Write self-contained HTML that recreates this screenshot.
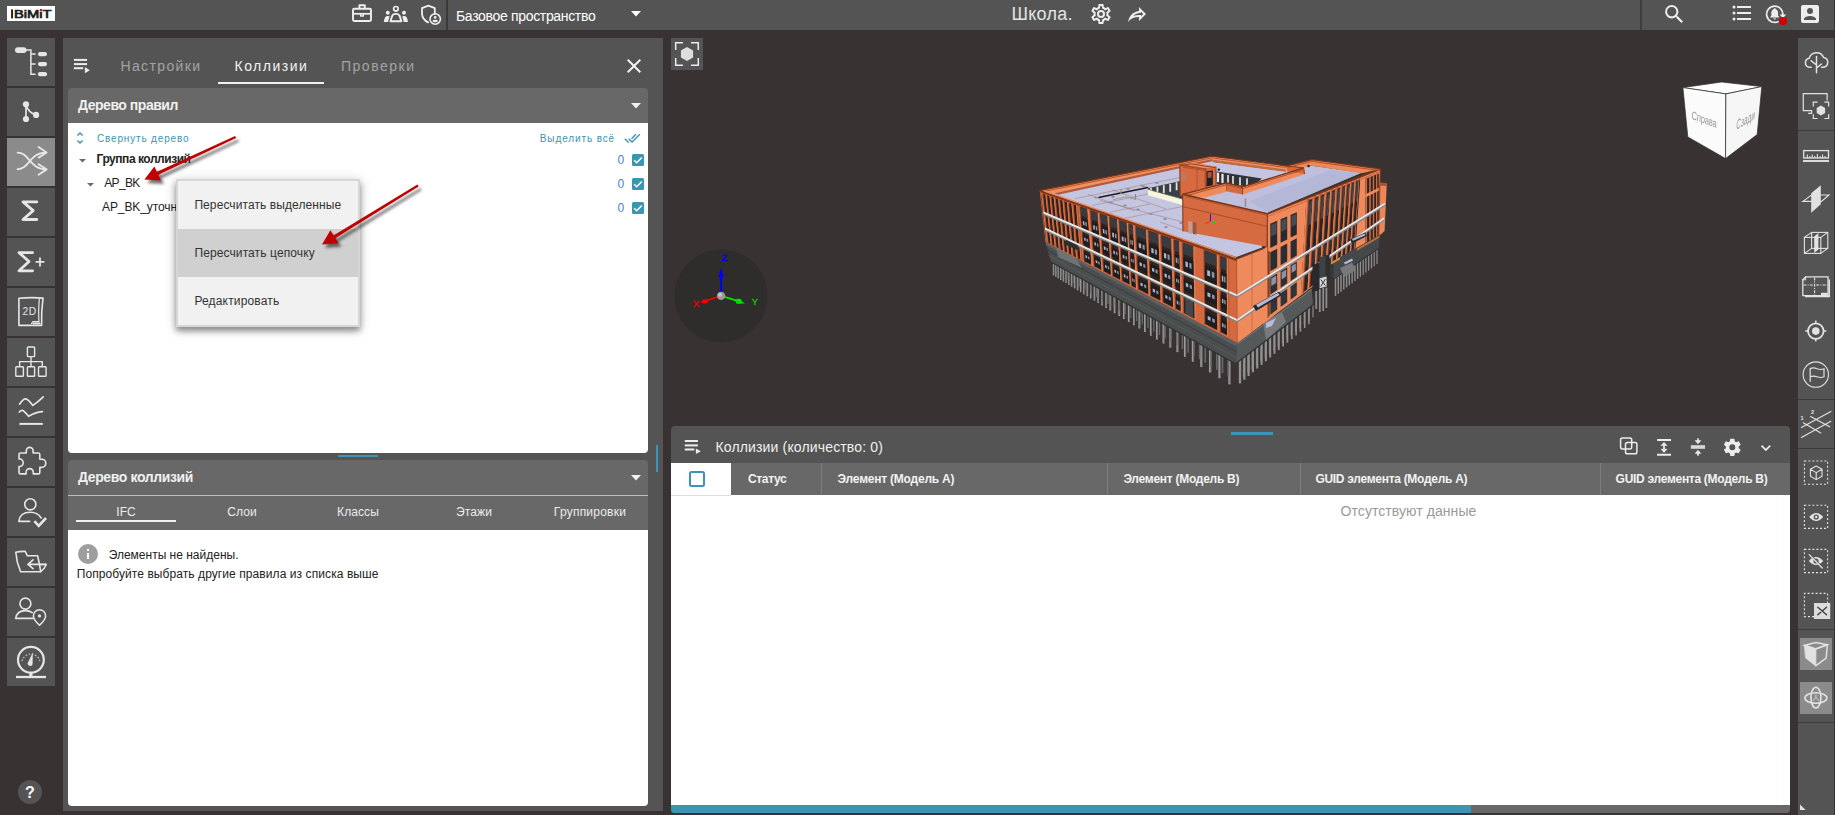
<!DOCTYPE html>
<html lang="ru">
<head>
<meta charset="utf-8">
<title>BIMIT</title>
<style>
*{box-sizing:border-box;margin:0;padding:0}
html,body{width:1835px;height:815px;overflow:hidden}
body{background:#383332;font-family:"Liberation Sans",sans-serif;position:relative;color:#222}
.abs{position:absolute}
.t{position:absolute;white-space:nowrap;line-height:1}
svg{position:absolute;overflow:visible}
#topbar{left:0;top:0;width:1835px;height:30px;background:#545454}
.lbtn{position:absolute;left:7px;width:48px;height:48px;background:#545454}
.lbtn.act{background:#8b8b8b}
#lpanel{left:63px;top:38px;width:600px;height:773px;background:#545454}
#rtool{left:1798px;top:38px;width:36px;height:777px;background:#545454}
#bpanel{left:671px;top:426px;width:1119px;height:387px;background:#545454;border-radius:4px 4px 3px 3px;overflow:hidden}
.hd{background:#686868}
.teal{background:#3b95b3}
.cb{position:absolute;left:632px;width:12px;height:12px;background:#3b95b3;border-radius:1.5px}
.cnt{position:absolute;font-size:12px;color:#3b82f6;line-height:1;left:617.5px}
.mi{position:absolute;left:0;width:180px;height:48px}
.th{position:absolute;top:463px;height:32px;background:#686868;border-left:1px solid #7d7d7d}
.tht{position:absolute;font-size:12px;font-weight:700;color:#f2f2f2;line-height:1;white-space:nowrap;top:473px}
.rsep{position:absolute;left:1798px;width:36px;height:1.5px;background:#3d3a3a}
</style>
</head>
<body>

<!-- ================= TOP BAR ================= -->
<div id="topbar" class="abs"></div>
<div class="abs" style="left:7px;top:6px;width:48px;height:15px;background:#fff"></div>
<svg style="left:7px;top:6px" width="48" height="15" viewBox="7 6 48 15">
<rect x="11.1" y="9.4" width="1.9" height="9" fill="#1e1e1e"/>
<text x="13.9" y="18.3" font-family="Liberation Sans, sans-serif" font-size="11.4" fill="#1e1e1e" stroke="#1e1e1e" stroke-width="0.7" textLength="37.6" lengthAdjust="spacingAndGlyphs">BiMiT</text>
<rect x="39.6" y="8.6" width="2.8" height="2.9" fill="#fff"/>
<rect x="39.9" y="9.1" width="2.2" height="2.1" fill="#f00000"/>
</svg>
<div class="abs" style="left:446px;top:0;width:2px;height:30px;background:#3c3939"></div>
<div class="t" style="left:456px;top:8.8px;font-size:14px;color:#fff;letter-spacing:-0.33px">Базовое пространство</div>
<svg style="left:631px;top:11px" width="10" height="6" viewBox="0 0 10 6"><path d="M0,0H10L5,5.5Z" fill="#fff"/></svg>
<div class="t" style="left:1011.5px;top:5px;font-size:18px;color:#e4e4e4;letter-spacing:0.25px">Школа.</div>
<div class="abs" style="left:1640px;top:0;width:2px;height:30px;background:#403d3d"></div>


<!-- top bar icons -->
<svg style="left:352px;top:4px" width="20" height="18" viewBox="0 0 20 18" fill="none" stroke="#efefef" stroke-width="1.9" stroke-linejoin="round">
  <rect x="1" y="4.8" width="18" height="12.2" rx="1.2"/>
  <path d="M7.4,4.8V1.2H12.8V4.8"/>
  <path d="M1,9.8H19" stroke-width="1.7"/>
  <path d="M8.6,9.8V12H11.4V9.8" stroke-width="1.3"/>
</svg>
<svg style="left:383px;top:5px" width="26" height="18" viewBox="0 0 26 18">
  <circle cx="12.9" cy="3.8" r="2.3" fill="none" stroke="#efefef" stroke-width="1.7"/>
  <path d="M7.4,16.2L9.3,10.6Q10,8.9 12.9,8.9Q15.8,8.9 16.5,10.6L18.4,16.2Z" fill="none" stroke="#efefef" stroke-width="1.9" stroke-linejoin="round"/>
  <circle cx="4.8" cy="7.7" r="2" fill="#efefef"/>
  <circle cx="21" cy="7.7" r="2" fill="#efefef"/>
  <path d="M0.8,17.1Q1.4,12.2 3.2,11.2Q4.6,10.6 6.6,11.2L5,17.1Z" fill="#efefef"/>
  <path d="M25,17.1Q24.4,12.2 22.6,11.2Q21.2,10.6 19.2,11.2L20.8,17.1Z" fill="#efefef"/>
</svg>
<svg style="left:420px;top:4px" width="22" height="22" viewBox="0 0 22 22" fill="none" stroke="#efefef">
  <path d="M14.8,10V4.2L8.4,1.6L2,4.2V9.6Q2.3,15.6 8.2,18.4" stroke-width="1.8" stroke-linejoin="round" stroke-linecap="round"/>
  <circle cx="15.2" cy="15" r="5.2" stroke-width="1.6"/>
  <circle cx="15.2" cy="13.4" r="1.3" fill="#efefef" stroke="none"/>
  <ellipse cx="15.2" cy="17" rx="2.7" ry="1.3" fill="#efefef" stroke="none"/>
</svg>
<svg style="left:1089px;top:1.9px" width="24" height="24" viewBox="0 0 24 24"><path fill="#ededed" d="M12,8A4,4 0 0,1 16,12A4,4 0 0,1 12,16A4,4 0 0,1 8,12A4,4 0 0,1 12,8M12,10A2,2 0 0,0 10,12A2,2 0 0,0 12,14A2,2 0 0,0 14,12A2,2 0 0,0 12,10M10,22C9.75,22 9.54,21.82 9.5,21.58L9.13,18.93C8.5,18.68 7.96,18.34 7.44,17.94L4.95,18.95C4.73,19.03 4.46,18.95 4.34,18.73L2.34,15.27C2.21,15.05 2.27,14.78 2.46,14.63L4.57,12.97L4.5,12L4.57,11L2.46,9.37C2.27,9.22 2.21,8.95 2.34,8.73L4.34,5.27C4.46,5.05 4.73,4.96 4.95,5.05L7.44,6.05C7.96,5.66 8.5,5.32 9.13,5.07L9.5,2.42C9.54,2.18 9.75,2 10,2H14C14.25,2 14.46,2.18 14.5,2.42L14.87,5.07C15.5,5.32 16.04,5.66 16.56,6.05L19.05,5.05C19.27,4.96 19.54,5.05 19.66,5.27L21.66,8.73C21.79,8.95 21.73,9.22 21.54,9.37L19.43,11L19.5,12L19.43,13L21.54,14.63C21.73,14.78 21.79,15.05 21.66,15.27L19.66,18.73C19.54,18.95 19.27,19.04 19.05,18.95L16.56,17.95C16.04,18.34 15.5,18.68 14.87,18.93L14.5,21.58C14.46,21.82 14.25,22 14,22H10M11.25,4L10.88,6.61C9.68,6.86 8.62,7.5 7.85,8.39L5.44,7.35L4.69,8.65L6.8,10.2C6.4,11.37 6.4,12.64 6.8,13.8L4.68,15.36L5.43,16.66L7.86,15.62C8.63,16.5 9.68,17.14 10.87,17.38L11.24,20H12.76L13.13,17.39C14.32,17.14 15.37,16.5 16.14,15.62L18.57,16.66L19.32,15.36L17.2,13.81C17.6,12.64 17.6,11.37 17.2,10.2L19.31,8.65L18.56,7.35L16.15,8.39C15.38,7.5 14.32,6.86 13.12,6.62L12.75,4H11.25Z"/></svg>
<svg style="left:1124.6px;top:2px" width="24" height="24" viewBox="0 0 24 24"><path fill="#ededed" d="M14,5V9C7,10 4,15 3,20C5.5,16.5 9,14.9 14,14.9V19L21,12L14,5M16,9.83L18.17,12L16,14.17V12.9H14C11.93,12.9 10.07,13.28 8.34,13.85C9.74,12.46 11.54,11.37 14.28,11L16,10.73V9.83Z"/></svg>
<svg style="left:1661.8px;top:1.6px" width="24.6" height="24.6" viewBox="0 0 24 24"><path fill="#ededed" d="M9.5,3A6.5,6.5 0 0,1 16,9.5C16,11.11 15.41,12.59 14.44,13.73L14.71,14H15.5L20.5,19L19,20.5L14,15.5V14.71L13.73,14.44C12.59,15.41 11.11,16 9.5,16A6.5,6.5 0 0,1 3,9.5A6.5,6.5 0 0,1 9.5,3M9.5,5C7,5 5,7 5,9.5C5,12 7,14 9.5,14C12,14 14,12 14,9.5C14,7 12,5 9.5,5Z"/></svg>
<svg style="left:1730.4px;top:1.2px" width="24" height="24" viewBox="0 0 24 24"><path fill="#ededed" d="M7,5H21V7H7V5M7,13V11H21V13H7M4,4.5A1.5,1.5 0 0,1 5.5,6A1.5,1.5 0 0,1 4,7.5A1.5,1.5 0 0,1 2.5,6A1.5,1.5 0 0,1 4,4.5M4,10.5A1.5,1.5 0 0,1 5.5,12A1.5,1.5 0 0,1 4,13.5A1.5,1.5 0 0,1 2.5,12A1.5,1.5 0 0,1 4,10.5M7,19V17H21V19H7M4,16.5A1.5,1.5 0 0,1 5.5,18A1.5,1.5 0 0,1 4,19.5A1.5,1.5 0 0,1 2.5,18A1.5,1.5 0 0,1 4,16.5Z"/></svg>
<svg style="left:1764px;top:3px" width="26" height="24" viewBox="0 0 26 24">
  <path d="M18.6,13.2A8.1,8.1 0 1,0 14.6,18.4" fill="none" stroke="#ededed" stroke-width="1.7"/>
  <path d="M15.6,11.4H22.2L18.9,15.2Z" fill="#ededed"/>
  <path d="M10.7,5.2C9.9,5.2 9.6,5.7 9.6,6.2C7.9,6.8 7.3,8.3 7.3,10V12.8L6.2,14V14.6H15.2V14L14.1,12.8V10C14.1,8.3 13.5,6.8 11.8,6.2C11.8,5.7 11.5,5.2 10.7,5.2ZM9.5,15.3A1.2,1.2 0 0,0 11.9,15.3Z" fill="#ededed"/>
  <circle cx="19.1" cy="17.9" r="4" fill="#d40000"/>
</svg>
<svg style="left:1798px;top:1.9px" width="24" height="24" viewBox="0 0 24 24"><path fill="#ededed" d="M6,17C6,15 10,13.9 12,13.9C14,13.9 18,15 18,17V18H6M15,9A3,3 0 0,1 12,12A3,3 0 0,1 9,9A3,3 0 0,1 12,6A3,3 0 0,1 15,9M3,5V19A2,2 0 0,0 5,21H19A2,2 0 0,0 21,19V5A2,2 0 0,0 19,3H5C3.89,3 3,3.9 3,5Z"/></svg>
<div class="abs" style="left:1834px;top:0;width:1px;height:815px;background:#383332"></div>

<!-- ================= LEFT TOOLBAR ================= -->
<div class="lbtn" style="top:38px"></div>
<div class="lbtn" style="top:88px"></div>
<div class="lbtn act" style="top:138px"></div>
<div class="lbtn" style="top:188px"></div>
<div class="lbtn" style="top:238px"></div>
<div class="lbtn" style="top:288px"></div>
<div class="lbtn" style="top:338px"></div>
<div class="lbtn" style="top:388px"></div>
<div class="lbtn" style="top:438px"></div>
<div class="lbtn" style="top:488px"></div>
<div class="lbtn" style="top:538px"></div>
<div class="lbtn" style="top:588px"></div>
<div class="lbtn" style="top:638px"></div>
<div class="abs" style="left:18px;top:780px;width:24px;height:24px;border-radius:50%;background:#545454"></div>
<div class="t" style="left:18px;width:24px;text-align:center;top:785px;font-size:16px;font-weight:700;color:#fff">?</div>

<!-- left toolbar icons -->
<svg style="left:7px;top:38px" width="48" height="48" viewBox="0 0 48 48" fill="none" stroke="#e6e6e6" stroke-linecap="round" stroke-linejoin="round">
<rect x="8" y="9.2" width="11.6" height="5.8" rx="2.9" fill="#e6e6e6" stroke="none"/>
<path d="M19,12H23.9V36.2H28.6M23.9,16H28.6M23.9,26H28.6" stroke-width="1.5" stroke-linecap="butt" stroke-linejoin="miter"/>
<rect x="30.9" y="13.9" width="9.2" height="4.3" rx="2.1" fill="#e6e6e6" stroke="none"/>
<rect x="30.9" y="23.9" width="9.2" height="4.3" rx="2.1" fill="#e6e6e6" stroke="none"/>
<rect x="30.9" y="34" width="9.2" height="4.3" rx="2.1" fill="#e6e6e6" stroke="none"/>
</svg>
<svg style="left:7px;top:88px" width="48" height="48" viewBox="0 0 48 48" fill="none" stroke="#e6e6e6" stroke-linecap="round" stroke-linejoin="round">
<circle cx="19" cy="16.3" r="3.1" fill="#e6e6e6" stroke="none"/>
<circle cx="19" cy="31" r="3.1" fill="#e6e6e6" stroke="none"/>
<circle cx="29.1" cy="26.9" r="3.1" fill="#e6e6e6" stroke="none"/>
<path d="M19,16.3V31M19.3,17.5Q21.5,24.5 28.5,26.7" stroke-width="1.7"/>
</svg>
<svg style="left:7px;top:138px" width="48" height="48" viewBox="0 0 48 48" fill="none" stroke="#e6e6e6" stroke-linecap="round" stroke-linejoin="round">
<path d="M10.6,14.6C22,14.6 23,31.3 38.5,31.3M10.6,31.3C22,31.3 23,14.6 38.5,14.6" stroke-width="1.9"/>
<path d="M31.6,9L39.6,14.5L31.6,19.6M31.6,26.2L39.6,31.4L31.6,36.8" stroke-width="1.9"/>
</svg>
<svg style="left:7px;top:188px" width="48" height="48" viewBox="0 0 48 48" fill="none" stroke="#e6e6e6" stroke-linecap="round" stroke-linejoin="round">
<path d="M29.8,13.9H16L26.2,22.6L16,31.5H29.8" stroke-width="2.8"/>
</svg>
<svg style="left:7px;top:238px" width="48" height="48" viewBox="0 0 48 48" fill="none" stroke="#e6e6e6" stroke-linecap="round" stroke-linejoin="round">
<path d="M25.6,14.6H12L22,23.5L12,32.8H25.6" stroke-width="2.8"/>
<path d="M28.6,23.9H37.4M33,19.4V28.4" stroke-width="1.8" stroke-linecap="butt"/>
</svg>
<svg style="left:7px;top:288px" width="48" height="48" viewBox="0 0 48 48" fill="none" stroke="#e6e6e6" stroke-linecap="round" stroke-linejoin="round">
<path d="M11.9,10.3Q24,9 36,10.1Q34.2,24 34.6,37.4H11.9Z" stroke-width="1.6"/>
<path d="M32.3,11Q31.2,24 32,33.6H26L24.6,35.6" stroke-width="1.2"/>
<path d="M26.5,35.3H32.6" stroke-width="1.8"/>
<text x="15.6" y="26.6" font-family="Liberation Sans, sans-serif" font-size="10.2" fill="#e6e6e6" stroke="none" letter-spacing="0.4">2D</text>
</svg>
<svg style="left:7px;top:338px" width="48" height="48" viewBox="0 0 48 48" fill="none" stroke="#e6e6e6" stroke-linecap="round" stroke-linejoin="round">
<g stroke-width="1.4" stroke-linejoin="round">
<rect x="20.4" y="9" width="7.2" height="9.6" rx="0.8"/>
<rect x="8.8" y="28.7" width="7.6" height="9.6" rx="0.8"/>
<rect x="20.4" y="28.7" width="7.2" height="9.6" rx="0.8"/>
<rect x="31.5" y="28.7" width="7.6" height="9.6" rx="0.8"/>
<path d="M24,18.6V28.7M12.6,28.7V23.6H35.3V28.7" stroke-linecap="butt"/>
</g>
</svg>
<svg style="left:7px;top:388px" width="48" height="48" viewBox="0 0 48 48" fill="none" stroke="#e6e6e6" stroke-linecap="round" stroke-linejoin="round">
<path d="M12.6,16.2Q16,10.8 18.6,10.8Q21,10.8 25.8,17.4Q31,14 36.2,8.8" stroke-width="1.7"/>
<path d="M12.3,24Q14.5,21.6 16.5,22.8Q19,25 21.6,28.3Q28,24.2 35.4,23.6" stroke-width="1.7"/>
<path d="M12.4,35.9H35.8" stroke-width="2" stroke-linecap="butt"/>
</svg>
<svg style="left:7px;top:438px" width="48" height="48" viewBox="0 0 48 48" fill="none" stroke="#e6e6e6" stroke-width="1.6" stroke-linejoin="round"><path d="M12,16.4Q12,15 13.4,15H19.3V12.8A3.4,3.4 0 0,1 26.1,12.8V15H31.4Q32.8,15 32.8,16.4V21.2H34.7A4.1,4.1 0 0,1 34.7,29.4H32.8V34.5Q32.8,35.9 31.4,35.9H26.3V34.2A3.6,3.6 0 0,0 19.1,34.2V35.9H13.4Q12,35.9 12,34.5V28.5H12.4A3.8,3.8 0 0,0 12.4,20.9H12Z"/></svg>
<svg style="left:7px;top:488px" width="48" height="48" viewBox="0 0 48 48" fill="none" stroke="#e6e6e6" stroke-linecap="round" stroke-linejoin="round">
<circle cx="23.3" cy="16.3" r="5.6" stroke-width="1.6"/>
<path d="M22.6,33.4H11.8Q12.8,24.2 23.3,24.2Q30.6,24.2 34.2,30" stroke-width="1.6"/>
<path d="M27.4,33.2L31.7,37.8L39,30" stroke-width="2.6" stroke-linecap="butt" stroke-linejoin="miter"/>
</svg>
<svg style="left:7px;top:538px" width="48" height="48" viewBox="0 0 48 48" fill="none" stroke="#e6e6e6" stroke-linecap="round" stroke-linejoin="round">
<path d="M8.8,14.2Q13,13.2 18.2,13.4L20.4,17.8H30.6Q32.6,26 33.7,33.7H13.6Q9.4,24 8.8,14.2Z" stroke-width="1.6"/>
<path d="M33.7,33.7Q37.5,31 39.2,26.4H32.6" stroke-width="1.5"/>
<path d="M21,26.4H39M26,21.9L21,26.4L26,30.7" stroke-width="1.7"/>
</svg>
<svg style="left:7px;top:588px" width="48" height="48" viewBox="0 0 48 48" fill="none" stroke="#e6e6e6" stroke-linecap="round" stroke-linejoin="round">
<circle cx="18.4" cy="15.6" r="5.5" stroke-width="1.6"/>
<path d="M26,30.4H8.7Q10,22.6 18.4,22.6Q22.6,22.6 25.2,24.6" stroke-width="1.6"/>
<path d="M32.5,37.2Q26.4,31.6 26.4,27.9A6.1,6.1 0 0,1 38.6,27.9Q38.6,31.6 32.5,37.2Z" stroke-width="1.5"/>
<circle cx="32.5" cy="27.9" r="1.6" fill="#e6e6e6" stroke="none"/>
</svg>
<svg style="left:7px;top:638px" width="48" height="48" viewBox="0 0 48 48" fill="none" stroke="#e6e6e6" stroke-linecap="round" stroke-linejoin="round">
<circle cx="23.9" cy="21.8" r="12.9" stroke-width="2.2"/>
<path d="M9,39H39" stroke-width="2.3" stroke-linecap="butt"/>
<path d="M23.9,34.8V39" stroke-width="3.2" stroke-linecap="butt"/>
<path d="M25.8,14.6L20.5,25.6Q20.8,28 23.2,28Q25.6,28 25.6,26Z" fill="#e6e6e6" stroke="none"/>
<path d="M15,23A9.2,9.2 0 0,1 32.8,23" stroke-width="1.3" stroke-dasharray="1.6 1.6" opacity="0.75" stroke-linecap="butt"/>
</svg>

<!-- ================= LEFT PANEL ================= -->
<div id="lpanel" class="abs"></div>
<div class="t" style="left:120.4px;top:59px;font-size:14px;color:#a3a3a3;letter-spacing:1.38px">Настройки</div>
<div class="t" style="left:234.5px;top:59px;font-size:14px;color:#f3f3f3;letter-spacing:1.49px">Коллизии</div>
<div class="t" style="left:341px;top:59px;font-size:14px;color:#a3a3a3;letter-spacing:1.51px">Проверки</div>
<div class="abs" style="left:218px;top:82px;width:106px;height:2px;background:#f0f0f0"></div>

<!-- rules tree section -->
<div class="abs hd" style="left:68px;top:88px;width:580px;height:35px;border-radius:4px 4px 0 0"></div>
<div class="t" style="left:78px;top:98px;font-size:14px;font-weight:700;color:#f0f0f0;letter-spacing:-0.47px">Дерево правил</div>
<svg style="left:631px;top:103px" width="10" height="6" viewBox="0 0 10 6"><path d="M0,0H10L5,5.5Z" fill="#f0f0f0"/></svg>
<div class="abs" style="left:68px;top:123px;width:580px;height:330px;background:#fff;border-radius:0 0 4px 4px"></div>

<div class="t" style="left:97px;top:134px;font-size:10px;color:#3b95b3;letter-spacing:0.83px">Свернуть дерево</div>
<div class="t" style="left:539.8px;top:134px;font-size:10px;color:#3b95b3;letter-spacing:0.88px">Выделить всё</div>

<div class="t" style="left:96.5px;top:152.8px;font-size:12px;font-weight:700;color:#222;letter-spacing:-0.46px">Группа коллизий</div>
<div class="t" style="left:104.2px;top:176.5px;font-size:12px;color:#222;letter-spacing:-0.64px">AP_BK</div>
<div class="t" style="left:102px;top:200.5px;font-size:12px;color:#222;letter-spacing:-0.1px">AP_BK_уточнение</div>
<svg style="left:78.5px;top:158.5px" width="7" height="4" viewBox="0 0 7 4"><path d="M0,0H7L3.5,3.6Z" fill="#6a6a6a"/></svg>
<svg style="left:86.5px;top:182.5px" width="7" height="4" viewBox="0 0 7 4"><path d="M0,0H7L3.5,3.6Z" fill="#6a6a6a"/></svg>

<div class="cnt" style="top:153.7px">0</div>
<div class="cnt" style="top:177.7px">0</div>
<div class="cnt" style="top:201.7px">0</div>
<div class="cb" style="top:154px"><svg style="left:0;top:0" width="12" height="12" viewBox="0 0 12 12"><path d="M2.2,6.2L4.7,8.7L9.8,3.4" fill="none" stroke="#fff" stroke-width="1.5"/></svg></div>
<div class="cb" style="top:178px"><svg style="left:0;top:0" width="12" height="12" viewBox="0 0 12 12"><path d="M2.2,6.2L4.7,8.7L9.8,3.4" fill="none" stroke="#fff" stroke-width="1.5"/></svg></div>
<div class="cb" style="top:202px"><svg style="left:0;top:0" width="12" height="12" viewBox="0 0 12 12"><path d="M2.2,6.2L4.7,8.7L9.8,3.4" fill="none" stroke="#fff" stroke-width="1.5"/></svg></div>


<!-- left panel icons -->
<svg style="left:73px;top:58px" width="18" height="16" viewBox="0 0 18 16" fill="#ededed">
  <rect x="0.9" y="0.9" width="13.2" height="2"/><rect x="0.9" y="5.1" width="13.2" height="2"/><rect x="0.9" y="9.2" width="9.3" height="2"/>
  <path d="M11.9,9.1V15.3L16.8,12.2Z"/>
</svg>
<svg style="left:621.9px;top:53.6px" width="24" height="24" viewBox="0 0 24 24"><path fill="#f2f2f2" d="M19,6.41L17.59,5L12,10.59L6.41,5L5,6.41L10.59,12L5,17.59L6.41,19L12,13.41L17.59,19L19,17.59L13.41,12L19,6.41Z"/></svg>
<svg style="left:72px;top:130.3px" width="16" height="16" viewBox="0 0 24 24"><path fill="#3b95b3" d="M12,18.17L8.83,15L7.41,16.41L12,21L16.59,16.41L15.17,15M12,5.83L15.17,9L16.58,7.59L12,3L7.41,7.59L8.83,9L12,5.83Z"/></svg>
<svg style="left:624.2px;top:130.2px" width="16.5" height="16.5" viewBox="0 0 24 24"><path fill="#3b95b3" d="M0.41,13.41L6,19L7.41,17.58L1.83,12M22.24,5.58L11.66,16.17L7.5,12L6.07,13.41L11.66,19L23.66,7M18,7L16.59,5.58L10.24,11.93L11.66,13.34L18,7Z"/></svg>

<!-- splitter handles -->
<div class="abs teal" style="left:338px;top:455px;width:40px;height:2px"></div>
<div class="abs teal" style="left:656px;top:445px;width:2px;height:27px"></div>

<!-- collision tree section -->
<div class="abs hd" style="left:68px;top:460px;width:580px;height:70px;border-radius:4px 4px 0 0"></div>
<div class="abs" style="left:68px;top:495px;width:580px;height:1px;background:#bdbdbd"></div>
<div class="t" style="left:78px;top:470px;font-size:14px;font-weight:700;color:#f0f0f0;letter-spacing:-0.38px">Дерево коллизий</div>
<svg style="left:631px;top:475px" width="10" height="6" viewBox="0 0 10 6"><path d="M0,0H10L5,5.5Z" fill="#f0f0f0"/></svg>
<div class="t" style="left:68px;width:116px;text-align:center;top:506px;font-size:12px;color:#ececec">IFC</div>
<div class="t" style="left:184px;width:116px;text-align:center;top:506px;font-size:12px;color:#ececec;letter-spacing:0.1px">Слои</div>
<div class="t" style="left:300px;width:116px;text-align:center;top:506px;font-size:12px;color:#ececec;letter-spacing:0.1px">Классы</div>
<div class="t" style="left:416px;width:116px;text-align:center;top:506px;font-size:12px;color:#ececec;letter-spacing:0.1px">Этажи</div>
<div class="t" style="left:532px;width:116px;text-align:center;top:506px;font-size:12px;color:#ececec;letter-spacing:0.23px">Группировки</div>
<div class="abs" style="left:76px;top:520px;width:100px;height:2px;background:#f0f0f0"></div>
<div class="abs" style="left:68px;top:530px;width:580px;height:276px;background:#fff;border-radius:0 0 4px 4px"></div>
<div class="t" style="left:108.7px;top:549px;font-size:12px;color:#222">Элементы не найдены.</div>
<div class="t" style="left:76.7px;top:568px;font-size:12px;color:#222;letter-spacing:0.08px">Попробуйте выбрать другие правила из списка выше</div>

<svg style="left:76px;top:542px" width="24" height="24" viewBox="0 0 24 24"><path fill="#9e9e9e" d="M13,9H11V7H13M13,17H11V11H13M12,2A10,10 0 0,0 2,12A10,10 0 0,0 12,22A10,10 0 0,0 22,12A10,10 0 0,0 12,2Z"/></svg>
<!-- context menu -->
<div class="abs" id="ctx" style="left:176px;top:179px;width:184px;height:148px;background:#f1f1f1;box-shadow:0 4px 6px rgba(0,0,0,.38),0 2px 12px rgba(0,0,0,.2);border:2px solid #d6d6d6">
  <div class="mi" style="top:48px;background:#d0d0d0"></div>
  <div class="t" style="left:16.4px;top:18px;font-size:12px;color:#333;letter-spacing:0.09px">Пересчитать выделенные</div>
  <div class="t" style="left:16.4px;top:66px;font-size:12px;color:#333;letter-spacing:0.11px">Пересчитать цепочку</div>
  <div class="t" style="left:16.4px;top:114px;font-size:12px;color:#333;letter-spacing:0.16px">Редактировать</div>
</div>


<!-- red annotation arrows -->
<svg style="left:0;top:0" width="700" height="400" viewBox="0 0 700 400">
<defs><filter id="ash" x="-20%" y="-20%" width="150%" height="150%"><feGaussianBlur stdDeviation="1.5"/></filter></defs>
<g transform="translate(3,3.5)" filter="url(#ash)" opacity="0.7"><path d="M235.1,135.9L153.3,173.6L154.7,176.6L236.1,138.1Z" fill="#333"/><path d="M144.4,179.6L154.4,166.4L160.9,180.4Z" fill="#333"/><path d="M417.4,184.4L330.2,237.4L331.9,240.3L418.6,186.4Z" fill="#333"/><path d="M322.0,244.4L330.4,230.2L338.5,243.3Z" fill="#333"/></g>
<path d="M235.1,135.9L153.3,173.6L154.7,176.6L236.1,138.1Z" fill="#c00000"/><path d="M144.4,179.6L154.4,166.4L160.9,180.4Z" fill="#c00000"/><path d="M417.4,184.4L330.2,237.4L331.9,240.3L418.6,186.4Z" fill="#c00000"/><path d="M322.0,244.4L330.4,230.2L338.5,243.3Z" fill="#c00000"/>
</svg>

<!-- ================= VIEWER ================= -->
<div class="abs" style="left:671px;top:38px;width:32px;height:32px;background:#545454"></div>
<svg style="left:671px;top:38px" width="32" height="32" viewBox="671 38 32 32" fill="none" stroke="#ececec" stroke-width="1.5" stroke-linecap="butt" stroke-linejoin="miter">
<path d="M675.7,50V42.8H683M691,42.8H698.3V50M698.3,58V65.3H691M683,65.3H675.7V58"/>
<path d="M687,46.9L693.1,50.4V57.5L687,61L680.9,57.5V50.4Z" fill="#dedede" stroke="none"/>
</svg>
<!-- BUILDING START -->
<svg style="left:1030px;top:150px" width="370" height="245" viewBox="1030 150 370 245" shape-rendering="geometricPrecision">
<path d="M1053.5,260.4L1053.5,275.4" fill="none" stroke="#9c9c9c" stroke-width="1.4"/>
<path d="M1054.0,260.4L1054.0,274.6" fill="none" stroke="#5c5c5c" stroke-width="0.48999999999999994"/>
<path d="M1055.9,261.7L1055.9,276.8" fill="none" stroke="#9c9c9c" stroke-width="1.4134228187919462"/>
<path d="M1056.4,261.7L1056.4,276.0" fill="none" stroke="#5c5c5c" stroke-width="0.4946979865771811"/>
<path d="M1058.3,263.0L1058.3,278.3" fill="none" stroke="#9c9c9c" stroke-width="1.4272479564032696"/>
<path d="M1058.8,263.0L1058.8,277.5" fill="none" stroke="#5c5c5c" stroke-width="0.4995367847411443"/>
<path d="M1060.8,264.4L1060.8,279.9" fill="none" stroke="#9c9c9c" stroke-width="1.44149377593361"/>
<path d="M1061.3,264.4L1061.3,279.1" fill="none" stroke="#5c5c5c" stroke-width="0.5045228215767634"/>
<path d="M1063.4,265.8L1063.4,281.5" fill="none" stroke="#9c9c9c" stroke-width="1.4561797752808987"/>
<path d="M1063.9,265.8L1063.9,280.7" fill="none" stroke="#5c5c5c" stroke-width="0.5096629213483145"/>
<path d="M1066.1,267.3L1066.1,283.1" fill="none" stroke="#9c9c9c" stroke-width="1.47132667617689"/>
<path d="M1066.6,267.3L1066.6,282.3" fill="none" stroke="#5c5c5c" stroke-width="0.5149643366619114"/>
<path d="M1068.8,268.8L1068.8,284.9" fill="none" stroke="#9c9c9c" stroke-width="1.4869565217391303"/>
<path d="M1069.3,268.8L1069.3,284.1" fill="none" stroke="#5c5c5c" stroke-width="0.5204347826086956"/>
<path d="M1071.6,270.4L1071.6,286.6" fill="none" stroke="#9c9c9c" stroke-width="1.5030927835051546"/>
<path d="M1072.2,270.4L1072.2,285.8" fill="none" stroke="#5c5c5c" stroke-width="0.5260824742268041"/>
<path d="M1074.6,272.0L1074.6,288.4" fill="none" stroke="#9c9c9c" stroke-width="1.5197604790419161"/>
<path d="M1075.1,272.0L1075.1,287.6" fill="none" stroke="#5c5c5c" stroke-width="0.5319161676646706"/>
<path d="M1077.6,273.7L1077.6,290.3" fill="none" stroke="#9c9c9c" stroke-width="1.536986301369863"/>
<path d="M1078.1,273.7L1078.1,289.5" fill="none" stroke="#5c5c5c" stroke-width="0.537945205479452"/>
<path d="M1080.7,275.4L1080.7,292.2" fill="none" stroke="#9c9c9c" stroke-width="1.554798761609907"/>
<path d="M1081.3,275.4L1081.3,291.4" fill="none" stroke="#5c5c5c" stroke-width="0.5441795665634674"/>
<path d="M1084.0,277.2L1084.0,294.3" fill="none" stroke="#9c9c9c" stroke-width="1.573228346456693"/>
<path d="M1084.5,277.2L1084.5,293.5" fill="none" stroke="#5c5c5c" stroke-width="0.5506299212598424"/>
<path d="M1087.3,279.0L1087.3,296.3" fill="none" stroke="#9c9c9c" stroke-width="1.5923076923076922"/>
<path d="M1087.9,279.0L1087.9,295.5" fill="none" stroke="#5c5c5c" stroke-width="0.5573076923076923"/>
<path d="M1090.8,280.9L1090.8,298.5" fill="none" stroke="#9c9c9c" stroke-width="1.6120717781402936"/>
<path d="M1091.4,280.9L1091.4,297.7" fill="none" stroke="#5c5c5c" stroke-width="0.5642251223491027"/>
<path d="M1094.4,282.9L1094.4,300.7" fill="none" stroke="#9c9c9c" stroke-width="1.6325581395348836"/>
<path d="M1095.0,282.9L1095.0,299.9" fill="none" stroke="#5c5c5c" stroke-width="0.5713953488372092"/>
<path d="M1098.2,285.0L1098.2,303.0" fill="none" stroke="#9c9c9c" stroke-width="1.6538071065989848"/>
<path d="M1098.7,285.0L1098.7,302.2" fill="none" stroke="#5c5c5c" stroke-width="0.5788324873096446"/>
<path d="M1102.1,287.1L1102.1,305.4" fill="none" stroke="#9c9c9c" stroke-width="1.6758620689655173"/>
<path d="M1102.6,287.1L1102.6,304.6" fill="none" stroke="#5c5c5c" stroke-width="0.586551724137931"/>
<path d="M1106.1,289.3L1106.1,307.9" fill="none" stroke="#9c9c9c" stroke-width="1.698769771528998"/>
<path d="M1106.7,289.3L1106.7,307.1" fill="none" stroke="#5c5c5c" stroke-width="0.5945694200351492"/>
<path d="M1110.3,291.7L1110.3,310.5" fill="none" stroke="#9c9c9c" stroke-width="1.7225806451612902"/>
<path d="M1110.9,291.7L1110.9,309.7" fill="none" stroke="#5c5c5c" stroke-width="0.6029032258064515"/>
<path d="M1114.6,294.1L1114.6,313.2" fill="none" stroke="#9c9c9c" stroke-width="1.7473491773308958"/>
<path d="M1115.2,294.1L1115.2,312.4" fill="none" stroke="#5c5c5c" stroke-width="0.6115722120658135"/>
<path d="M1119.2,296.6L1119.2,316.0" fill="none" stroke="#9c9c9c" stroke-width="1.7731343283582088"/>
<path d="M1119.8,296.6L1119.8,315.2" fill="none" stroke="#5c5c5c" stroke-width="0.620597014925373"/>
<path d="M1123.9,299.2L1123.9,319.0" fill="none" stroke="#9c9c9c" stroke-width="1.7999999999999998"/>
<path d="M1124.5,299.2L1124.5,318.2" fill="none" stroke="#5c5c5c" stroke-width="0.6299999999999999"/>
<path d="M1128.8,301.9L1128.8,322.0" fill="none" stroke="#9c9c9c" stroke-width="1.8280155642023346"/>
<path d="M1129.5,301.9L1129.5,321.2" fill="none" stroke="#5c5c5c" stroke-width="0.639805447470817"/>
<path d="M1134.0,304.7L1134.0,325.2" fill="none" stroke="#9c9c9c" stroke-width="1.8572564612326043"/>
<path d="M1134.6,304.7L1134.6,324.4" fill="none" stroke="#5c5c5c" stroke-width="0.6500397614314115"/>
<path d="M1139.4,307.7L1139.4,328.5" fill="none" stroke="#9c9c9c" stroke-width="1.8878048780487804"/>
<path d="M1140.0,307.7L1140.0,327.7" fill="none" stroke="#5c5c5c" stroke-width="0.6607317073170731"/>
<path d="M1145.0,310.8L1145.0,332.0" fill="none" stroke="#9c9c9c" stroke-width="1.9197505197505196"/>
<path d="M1145.6,310.8L1145.6,331.2" fill="none" stroke="#5c5c5c" stroke-width="0.6719126819126818"/>
<path d="M1150.9,314.0L1150.9,335.7" fill="none" stroke="#9c9c9c" stroke-width="1.9531914893617022"/>
<path d="M1151.5,314.0L1151.5,334.9" fill="none" stroke="#5c5c5c" stroke-width="0.6836170212765957"/>
<path d="M1157.0,317.4L1157.0,339.5" fill="none" stroke="#9c9c9c" stroke-width="1.988235294117647"/>
<path d="M1157.7,317.4L1157.7,338.7" fill="none" stroke="#5c5c5c" stroke-width="0.6958823529411764"/>
<path d="M1163.5,321.0L1163.5,343.5" fill="none" stroke="#9c9c9c" stroke-width="2.025"/>
<path d="M1164.2,321.0L1164.2,342.7" fill="none" stroke="#5c5c5c" stroke-width="0.7087499999999999"/>
<path d="M1170.3,324.7L1170.3,347.7" fill="none" stroke="#9c9c9c" stroke-width="2.063615560640732"/>
<path d="M1171.0,324.7L1171.0,346.9" fill="none" stroke="#5c5c5c" stroke-width="0.7222654462242561"/>
<path d="M1177.4,328.7L1177.4,352.1" fill="none" stroke="#9c9c9c" stroke-width="2.104225352112676"/>
<path d="M1178.2,328.7L1178.2,351.3" fill="none" stroke="#5c5c5c" stroke-width="0.7364788732394365"/>
<path d="M1185.0,332.8L1185.0,356.8" fill="none" stroke="#9c9c9c" stroke-width="2.146987951807229"/>
<path d="M1185.7,332.8L1185.7,356.0" fill="none" stroke="#5c5c5c" stroke-width="0.7514457831325301"/>
<path d="M1192.9,337.2L1192.9,361.7" fill="none" stroke="#9c9c9c" stroke-width="2.192079207920792"/>
<path d="M1193.7,337.2L1193.7,360.9" fill="none" stroke="#5c5c5c" stroke-width="0.7672277227722771"/>
<path d="M1201.3,341.8L1201.3,366.9" fill="none" stroke="#9c9c9c" stroke-width="2.2396946564885494"/>
<path d="M1202.1,341.8L1202.1,366.1" fill="none" stroke="#5c5c5c" stroke-width="0.7838931297709922"/>
<path d="M1210.1,346.7L1210.1,372.4" fill="none" stroke="#9c9c9c" stroke-width="2.2900523560209423"/>
<path d="M1211.0,346.7L1211.0,371.6" fill="none" stroke="#5c5c5c" stroke-width="0.8015183246073297"/>
<path d="M1219.5,351.9L1219.5,378.2" fill="none" stroke="#9c9c9c" stroke-width="2.343396226415094"/>
<path d="M1220.4,351.9L1220.4,377.4" fill="none" stroke="#5c5c5c" stroke-width="0.8201886792452828"/>
<path d="M1229.5,357.3L1229.5,384.3" fill="none" stroke="#9c9c9c" stroke-width="2.4"/>
<path d="M1230.3,357.3L1230.3,383.5" fill="none" stroke="#5c5c5c" stroke-width="0.84"/>
<path d="M1062.2,265.2L1062.2,276.2" fill="none" stroke="#6a6a6a" stroke-width="1.0"/>
<path d="M1067.9,268.3L1067.9,279.6" fill="none" stroke="#6a6a6a" stroke-width="1.0206896551724138"/>
<path d="M1073.6,271.5L1073.6,283.1" fill="none" stroke="#6a6a6a" stroke-width="1.0413793103448277"/>
<path d="M1079.4,274.6L1079.4,286.6" fill="none" stroke="#6a6a6a" stroke-width="1.0620689655172413"/>
<path d="M1085.1,277.8L1085.1,290.0" fill="none" stroke="#6a6a6a" stroke-width="1.0827586206896551"/>
<path d="M1090.8,280.9L1090.8,293.5" fill="none" stroke="#6a6a6a" stroke-width="1.103448275862069"/>
<path d="M1096.5,284.1L1096.5,297.0" fill="none" stroke="#6a6a6a" stroke-width="1.1241379310344828"/>
<path d="M1102.3,287.2L1102.3,300.4" fill="none" stroke="#6a6a6a" stroke-width="1.1448275862068966"/>
<path d="M1108.0,290.4L1108.0,303.9" fill="none" stroke="#6a6a6a" stroke-width="1.1655172413793102"/>
<path d="M1113.7,293.6L1113.7,307.3" fill="none" stroke="#6a6a6a" stroke-width="1.186206896551724"/>
<path d="M1119.4,296.7L1119.4,310.8" fill="none" stroke="#6a6a6a" stroke-width="1.206896551724138"/>
<path d="M1125.2,299.9L1125.2,314.3" fill="none" stroke="#6a6a6a" stroke-width="1.2275862068965517"/>
<path d="M1130.9,303.0L1130.9,317.7" fill="none" stroke="#6a6a6a" stroke-width="1.2482758620689656"/>
<path d="M1136.6,306.2L1136.6,321.2" fill="none" stroke="#6a6a6a" stroke-width="1.2689655172413792"/>
<path d="M1142.3,309.3L1142.3,324.7" fill="none" stroke="#6a6a6a" stroke-width="1.2896551724137932"/>
<path d="M1148.1,312.5L1148.1,328.1" fill="none" stroke="#6a6a6a" stroke-width="1.3103448275862069"/>
<path d="M1153.8,315.6L1153.8,331.6" fill="none" stroke="#6a6a6a" stroke-width="1.3310344827586207"/>
<path d="M1159.5,318.8L1159.5,335.1" fill="none" stroke="#6a6a6a" stroke-width="1.3517241379310345"/>
<path d="M1165.2,321.9L1165.2,338.5" fill="none" stroke="#6a6a6a" stroke-width="1.3724137931034484"/>
<path d="M1171.0,325.1L1171.0,342.0" fill="none" stroke="#6a6a6a" stroke-width="1.393103448275862"/>
<path d="M1176.7,328.2L1176.7,345.4" fill="none" stroke="#6a6a6a" stroke-width="1.4137931034482758"/>
<path d="M1182.4,331.4L1182.4,348.9" fill="none" stroke="#6a6a6a" stroke-width="1.4344827586206896"/>
<path d="M1188.1,334.5L1188.1,352.4" fill="none" stroke="#6a6a6a" stroke-width="1.4551724137931035"/>
<path d="M1193.9,337.7L1193.9,355.8" fill="none" stroke="#6a6a6a" stroke-width="1.4758620689655173"/>
<path d="M1199.6,340.9L1199.6,359.3" fill="none" stroke="#6a6a6a" stroke-width="1.4965517241379311"/>
<path d="M1205.3,344.0L1205.3,362.8" fill="none" stroke="#6a6a6a" stroke-width="1.5172413793103448"/>
<path d="M1211.0,347.2L1211.0,366.2" fill="none" stroke="#6a6a6a" stroke-width="1.5379310344827586"/>
<path d="M1216.8,350.3L1216.8,369.7" fill="none" stroke="#6a6a6a" stroke-width="1.5586206896551724"/>
<path d="M1222.5,353.5L1222.5,373.2" fill="none" stroke="#6a6a6a" stroke-width="1.5793103448275863"/>
<path d="M1228.2,356.6L1228.2,376.6" fill="none" stroke="#6a6a6a" stroke-width="1.6"/>
<path d="M1244.0,350.4L1244.0,376.4" fill="none" stroke="#777777" stroke-width="2.3"/>
<path d="M1248.3,347.1L1248.3,372.7" fill="none" stroke="#777777" stroke-width="2.25"/>
<path d="M1252.6,343.8L1252.6,369.0" fill="none" stroke="#777777" stroke-width="2.1999999999999997"/>
<path d="M1256.9,340.6L1256.9,365.3" fill="none" stroke="#777777" stroke-width="2.15"/>
<path d="M1261.2,337.3L1261.2,361.6" fill="none" stroke="#777777" stroke-width="2.0999999999999996"/>
<path d="M1265.6,334.1L1265.6,357.9" fill="none" stroke="#777777" stroke-width="2.05"/>
<path d="M1269.9,330.8L1269.9,354.2" fill="none" stroke="#777777" stroke-width="1.9999999999999998"/>
<path d="M1274.2,327.6L1274.2,350.5" fill="none" stroke="#777777" stroke-width="1.9499999999999997"/>
<path d="M1278.5,324.3L1278.5,346.8" fill="none" stroke="#777777" stroke-width="1.9"/>
<path d="M1282.8,321.1L1282.8,343.1" fill="none" stroke="#777777" stroke-width="1.8499999999999999"/>
<path d="M1287.1,317.8L1287.1,339.4" fill="none" stroke="#777777" stroke-width="1.7999999999999998"/>
<path d="M1291.4,314.5L1291.4,335.7" fill="none" stroke="#777777" stroke-width="1.7499999999999998"/>
<path d="M1295.8,311.3L1295.8,332.0" fill="none" stroke="#777777" stroke-width="1.6999999999999997"/>
<path d="M1300.1,308.0L1300.1,328.3" fill="none" stroke="#777777" stroke-width="1.65"/>
<path d="M1304.4,304.8L1304.4,324.6" fill="none" stroke="#777777" stroke-width="1.5999999999999996"/>
<path d="M1308.7,301.5L1308.7,321.0" fill="none" stroke="#777777" stroke-width="1.5499999999999998"/>
<path d="M1313.0,298.3L1313.0,317.3" fill="none" stroke="#777777" stroke-width="1.4999999999999998"/>
<path d="M1240.0,357.4L1240.0,383.4" fill="none" stroke="#919191" stroke-width="2.3"/>
<path d="M1244.3,354.1L1244.3,379.7" fill="none" stroke="#919191" stroke-width="2.25"/>
<path d="M1248.6,350.9L1248.6,376.0" fill="none" stroke="#919191" stroke-width="2.1999999999999997"/>
<path d="M1252.9,347.6L1252.9,372.3" fill="none" stroke="#919191" stroke-width="2.15"/>
<path d="M1257.2,344.4L1257.2,368.6" fill="none" stroke="#919191" stroke-width="2.0999999999999996"/>
<path d="M1261.6,341.1L1261.6,364.9" fill="none" stroke="#919191" stroke-width="2.05"/>
<path d="M1265.9,337.8L1265.9,361.2" fill="none" stroke="#919191" stroke-width="1.9999999999999998"/>
<path d="M1270.2,334.6L1270.2,357.5" fill="none" stroke="#919191" stroke-width="1.9499999999999997"/>
<path d="M1274.5,331.3L1274.5,353.8" fill="none" stroke="#919191" stroke-width="1.9"/>
<path d="M1278.8,328.1L1278.8,350.1" fill="none" stroke="#919191" stroke-width="1.8499999999999999"/>
<path d="M1283.1,324.8L1283.1,346.4" fill="none" stroke="#919191" stroke-width="1.7999999999999998"/>
<path d="M1287.4,321.6L1287.4,342.8" fill="none" stroke="#919191" stroke-width="1.7499999999999998"/>
<path d="M1291.8,318.3L1291.8,339.1" fill="none" stroke="#919191" stroke-width="1.6999999999999997"/>
<path d="M1296.1,315.1L1296.1,335.4" fill="none" stroke="#919191" stroke-width="1.65"/>
<path d="M1300.4,311.8L1300.4,331.7" fill="none" stroke="#919191" stroke-width="1.5999999999999996"/>
<path d="M1304.7,308.5L1304.7,328.0" fill="none" stroke="#919191" stroke-width="1.5499999999999998"/>
<path d="M1309.0,305.3L1309.0,324.3" fill="none" stroke="#919191" stroke-width="1.4999999999999998"/>
<path d="M1335.5,274.9L1335.5,295.9" fill="none" stroke="#8e8e8e" stroke-width="1.5"/>
<path d="M1338.3,273.0L1338.3,293.8" fill="none" stroke="#8e8e8e" stroke-width="1.48"/>
<path d="M1341.0,271.1L1341.0,291.7" fill="none" stroke="#8e8e8e" stroke-width="1.46"/>
<path d="M1343.8,269.2L1343.8,289.5" fill="none" stroke="#8e8e8e" stroke-width="1.44"/>
<path d="M1346.6,267.3L1346.6,287.4" fill="none" stroke="#8e8e8e" stroke-width="1.42"/>
<path d="M1349.3,265.5L1349.3,285.3" fill="none" stroke="#8e8e8e" stroke-width="1.4"/>
<path d="M1352.1,263.6L1352.1,283.2" fill="none" stroke="#8e8e8e" stroke-width="1.38"/>
<path d="M1354.9,261.7L1354.9,281.0" fill="none" stroke="#8e8e8e" stroke-width="1.36"/>
<path d="M1357.6,259.8L1357.6,278.9" fill="none" stroke="#8e8e8e" stroke-width="1.34"/>
<path d="M1360.4,257.9L1360.4,276.8" fill="none" stroke="#8e8e8e" stroke-width="1.32"/>
<path d="M1363.2,256.0L1363.2,274.7" fill="none" stroke="#8e8e8e" stroke-width="1.3"/>
<path d="M1365.9,254.1L1365.9,272.5" fill="none" stroke="#8e8e8e" stroke-width="1.28"/>
<path d="M1368.7,252.2L1368.7,270.4" fill="none" stroke="#8e8e8e" stroke-width="1.26"/>
<path d="M1371.5,250.3L1371.5,268.3" fill="none" stroke="#8e8e8e" stroke-width="1.24"/>
<path d="M1374.2,248.4L1374.2,266.2" fill="none" stroke="#8e8e8e" stroke-width="1.22"/>
<path d="M1377.0,246.6L1377.0,264.1" fill="none" stroke="#8e8e8e" stroke-width="1.2"/>
<path d="M1045.5,242.2L1237.5,342.9L1235.6,363.7L1051.0,262.0Z" fill="#4b4e4f"/>
<path d="M1045.5,242.2L1237.5,342.9L1237.5,346.9L1046.0,245.2Z" fill="#5d6061"/>
<path d="M1051.0,262.0L1235.6,363.7" fill="none" stroke="#2e3031" stroke-width="1.2"/>
<path d="M1047.0,250.0L1236.5,352.0" fill="none" stroke="#3a3c3d" stroke-width="1.0"/>
<path d="M1048.5,255.5L1236.0,357.5" fill="none" stroke="#5a5d5e" stroke-width="0.8"/>
<path d="M1237.5,342.9L1311.6,288.7L1313.2,304.7L1235.6,363.7Z" fill="#56595a"/>
<path d="M1237.5,343.9L1311.6,289.7" fill="none" stroke="#6d7071" stroke-width="1.2"/>
<path d="M1235.6,363.7L1313.2,304.7" fill="none" stroke="#2e3031" stroke-width="1.2"/>
<path d="M1263.0,322.0L1282.0,312.0L1286.0,322.0L1266.0,340.0Z" fill="#77797c"/>
<path d="M1266.0,323.0L1276.0,318.0L1272.0,326.0L1266.0,328.0Z" fill="#b9badb"/>
<path d="M1056.0,247.0L1074.0,255.0L1082.0,268.0L1058.0,257.0Z" fill="#6f7274"/>
<path d="M1039.7,190.6L1237.0,259.0L1237.5,342.9L1045.5,242.2Z" fill="#d4683f"/>
<path d="M1040.7,192.9L1079.2,206.5L1083.6,261.3L1046.2,241.8Z" fill="#2c2220"/>
<path d="M1041.1,192.1L1043.0,192.7L1048.5,243.3L1046.7,242.3Z" fill="#b9552f"/>
<path d="M1041.1,192.1L1041.9,192.4L1047.5,242.8L1046.7,242.3Z" fill="#e27a4c"/>
<path d="M1045.2,193.5L1047.1,194.2L1052.5,245.4L1050.7,244.4Z" fill="#b9552f"/>
<path d="M1045.2,193.5L1046.0,193.8L1051.5,244.8L1050.7,244.4Z" fill="#e27a4c"/>
<path d="M1049.4,195.0L1051.3,195.7L1056.6,247.5L1054.7,246.5Z" fill="#b9552f"/>
<path d="M1049.4,195.0L1050.2,195.3L1055.6,247.0L1054.7,246.5Z" fill="#e27a4c"/>
<path d="M1053.6,196.5L1055.6,197.2L1060.8,249.7L1058.9,248.7Z" fill="#b9552f"/>
<path d="M1053.6,196.5L1054.5,196.8L1059.7,249.1L1058.9,248.7Z" fill="#e27a4c"/>
<path d="M1058.0,198.0L1060.0,198.7L1065.0,251.9L1063.1,250.9Z" fill="#b9552f"/>
<path d="M1058.0,198.0L1058.8,198.3L1063.9,251.3L1063.1,250.9Z" fill="#e27a4c"/>
<path d="M1062.4,199.5L1064.4,200.2L1069.3,254.2L1067.3,253.1Z" fill="#b9552f"/>
<path d="M1062.4,199.5L1063.3,199.8L1068.2,253.6L1067.3,253.1Z" fill="#e27a4c"/>
<path d="M1066.8,201.1L1068.9,201.8L1073.7,256.5L1071.7,255.4Z" fill="#b9552f"/>
<path d="M1066.8,201.1L1067.7,201.4L1072.6,255.9L1071.7,255.4Z" fill="#e27a4c"/>
<path d="M1071.4,202.7L1073.5,203.4L1078.2,258.8L1076.1,257.7Z" fill="#b9552f"/>
<path d="M1071.4,202.7L1072.3,203.0L1077.0,258.2L1076.1,257.7Z" fill="#e27a4c"/>
<path d="M1076.0,204.3L1078.2,205.1L1082.7,261.2L1080.6,260.1Z" fill="#b9552f"/>
<path d="M1076.0,204.3L1077.0,204.6L1081.5,260.6L1080.6,260.1Z" fill="#e27a4c"/>
<path d="M1079.2,206.0L1080.3,206.4L1084.7,261.9L1083.7,261.4Z" fill="#9a4424"/>
<path d="M1080.3,206.4L1086.9,208.7L1091.1,264.7L1084.7,261.4Z" fill="#33231e"/>
<path d="M1080.4,206.7L1087.0,209.0L1087.6,217.9L1081.1,215.4Z" fill="#383b3f"/>
<path d="M1081.2,217.7L1087.8,220.3L1088.6,230.9L1082.1,228.2Z" fill="#1d1e21"/>
<path d="M1082.8,220.9L1084.3,221.5L1084.6,225.6L1083.1,225.0Z" fill="#b4b4c2"/>
<path d="M1085.2,221.8L1086.7,222.4L1087.0,226.5L1085.6,226.0Z" fill="#8f90a4"/>
<path d="M1082.6,234.3L1089.1,237.1L1089.8,246.6L1083.3,243.6Z" fill="#1d1e21"/>
<path d="M1084.1,237.5L1085.6,238.2L1085.8,241.1L1084.3,240.4Z" fill="#b4b4c2"/>
<path d="M1086.5,238.6L1088.0,239.2L1088.2,242.2L1086.7,241.5Z" fill="#8f90a4"/>
<path d="M1083.9,251.8L1090.4,254.9L1091.1,264.1L1084.6,260.8Z" fill="#1d1e21"/>
<path d="M1085.4,255.0L1087.0,255.8L1087.2,258.4L1085.6,257.7Z" fill="#b4b4c2"/>
<path d="M1087.9,256.2L1089.3,256.9L1089.5,259.6L1088.1,258.9Z" fill="#8f90a4"/>
<path d="M1089.6,209.7L1090.7,210.0L1094.8,267.2L1093.8,266.7Z" fill="#9a4424"/>
<path d="M1090.7,210.0L1097.5,212.4L1101.4,270.0L1094.8,266.6Z" fill="#33231e"/>
<path d="M1090.8,210.3L1097.5,212.7L1098.2,221.9L1091.4,219.3Z" fill="#383b3f"/>
<path d="M1091.6,221.7L1098.3,224.3L1099.1,235.3L1092.3,232.5Z" fill="#1d1e21"/>
<path d="M1093.1,224.9L1094.7,225.6L1095.0,229.8L1093.4,229.2Z" fill="#b4b4c2"/>
<path d="M1095.7,226.0L1097.2,226.5L1097.4,230.8L1096.0,230.2Z" fill="#8f90a4"/>
<path d="M1092.8,238.8L1099.5,241.7L1100.1,251.5L1093.5,248.4Z" fill="#1d1e21"/>
<path d="M1094.3,242.1L1095.9,242.8L1096.1,245.8L1094.5,245.1Z" fill="#b4b4c2"/>
<path d="M1096.9,243.2L1098.3,243.9L1098.5,246.9L1097.1,246.2Z" fill="#8f90a4"/>
<path d="M1094.1,256.7L1100.7,260.0L1101.4,269.4L1094.8,266.0Z" fill="#1d1e21"/>
<path d="M1095.6,260.1L1097.2,260.9L1097.4,263.6L1095.8,262.8Z" fill="#b4b4c2"/>
<path d="M1098.1,261.3L1099.6,262.1L1099.8,264.8L1098.3,264.1Z" fill="#8f90a4"/>
<path d="M1099.2,213.0L1100.3,213.4L1104.2,272.1L1103.1,271.5Z" fill="#9a4424"/>
<path d="M1100.3,213.4L1107.3,215.9L1110.9,275.0L1104.1,271.5Z" fill="#33231e"/>
<path d="M1100.3,213.7L1107.3,216.2L1107.9,225.6L1100.9,222.9Z" fill="#383b3f"/>
<path d="M1101.1,225.4L1108.1,228.1L1108.7,239.3L1101.8,236.5Z" fill="#1d1e21"/>
<path d="M1102.7,228.7L1104.3,229.4L1104.6,233.7L1103.0,233.0Z" fill="#b4b4c2"/>
<path d="M1105.3,229.8L1106.8,230.4L1107.1,234.7L1105.6,234.1Z" fill="#8f90a4"/>
<path d="M1102.3,242.9L1109.1,245.9L1109.8,255.9L1102.9,252.7Z" fill="#1d1e21"/>
<path d="M1103.8,246.3L1105.5,247.0L1105.7,250.1L1104.0,249.4Z" fill="#b4b4c2"/>
<path d="M1106.4,247.4L1107.9,248.1L1108.1,251.2L1106.6,250.5Z" fill="#8f90a4"/>
<path d="M1103.5,261.3L1110.3,264.7L1110.9,274.4L1104.1,270.8Z" fill="#1d1e21"/>
<path d="M1105.0,264.8L1106.6,265.6L1106.8,268.4L1105.2,267.5Z" fill="#b4b4c2"/>
<path d="M1107.6,266.1L1109.1,266.8L1109.3,269.6L1107.8,268.9Z" fill="#8f90a4"/>
<path d="M1108.7,216.4L1109.8,216.8L1113.4,276.9L1112.3,276.3Z" fill="#9a4424"/>
<path d="M1109.8,216.8L1117.0,219.3L1120.3,279.9L1113.3,276.3Z" fill="#33231e"/>
<path d="M1109.8,217.1L1117.0,219.6L1117.6,229.2L1110.4,226.5Z" fill="#383b3f"/>
<path d="M1110.5,229.0L1117.7,231.8L1118.3,243.3L1111.2,240.4Z" fill="#1d1e21"/>
<path d="M1112.1,232.4L1113.9,233.1L1114.1,237.6L1112.4,236.9Z" fill="#b4b4c2"/>
<path d="M1114.9,233.5L1116.4,234.1L1116.7,238.6L1115.1,238.0Z" fill="#8f90a4"/>
<path d="M1111.6,247.0L1118.7,250.1L1119.3,260.3L1112.2,257.1Z" fill="#1d1e21"/>
<path d="M1113.2,250.4L1114.9,251.2L1115.1,254.4L1113.4,253.6Z" fill="#b4b4c2"/>
<path d="M1115.9,251.6L1117.4,252.3L1117.6,255.5L1116.1,254.8Z" fill="#8f90a4"/>
<path d="M1112.7,265.9L1119.8,269.3L1120.3,279.3L1113.3,275.6Z" fill="#1d1e21"/>
<path d="M1114.3,269.4L1116.0,270.2L1116.2,273.1L1114.5,272.2Z" fill="#b4b4c2"/>
<path d="M1117.0,270.7L1118.5,271.5L1118.7,274.4L1117.1,273.6Z" fill="#8f90a4"/>
<path d="M1118.3,219.8L1119.4,220.1L1122.7,281.8L1121.6,281.2Z" fill="#9a4424"/>
<path d="M1119.4,220.1L1126.7,222.7L1129.8,284.8L1122.7,281.1Z" fill="#33231e"/>
<path d="M1119.4,220.5L1126.7,223.0L1127.2,232.9L1119.9,230.1Z" fill="#383b3f"/>
<path d="M1120.1,232.7L1127.3,235.5L1127.9,247.3L1120.7,244.3Z" fill="#1d1e21"/>
<path d="M1121.7,236.2L1123.4,236.9L1123.7,241.4L1121.9,240.7Z" fill="#b4b4c2"/>
<path d="M1124.4,237.3L1126.0,237.9L1126.3,242.5L1124.7,241.8Z" fill="#8f90a4"/>
<path d="M1121.1,251.1L1128.3,254.2L1128.8,264.8L1121.6,261.4Z" fill="#1d1e21"/>
<path d="M1122.7,254.7L1124.4,255.4L1124.5,258.7L1122.8,257.9Z" fill="#b4b4c2"/>
<path d="M1125.4,255.9L1127.0,256.6L1127.1,259.8L1125.6,259.1Z" fill="#8f90a4"/>
<path d="M1122.1,270.5L1129.2,274.0L1129.7,284.1L1122.6,280.5Z" fill="#1d1e21"/>
<path d="M1123.7,274.1L1125.4,274.9L1125.5,277.9L1123.8,277.0Z" fill="#b4b4c2"/>
<path d="M1126.4,275.4L1128.0,276.2L1128.1,279.1L1126.5,278.4Z" fill="#8f90a4"/>
<path d="M1127.7,223.1L1128.8,223.4L1131.8,286.5L1130.8,286.0Z" fill="#9a4424"/>
<path d="M1128.8,223.4L1132.9,224.9L1135.8,287.9L1131.8,285.9Z" fill="#33231e"/>
<path d="M1128.8,223.8L1132.9,225.2L1133.4,235.2L1129.3,233.7Z" fill="#383b3f"/>
<path d="M1129.4,236.3L1133.5,237.9L1134.0,249.9L1130.0,248.2Z" fill="#1d1e21"/>
<path d="M1130.4,239.6L1131.3,240.0L1131.6,244.6L1130.6,244.2Z" fill="#b4b4c2"/>
<path d="M1131.9,240.2L1132.8,240.6L1133.0,245.2L1132.1,244.9Z" fill="#8f90a4"/>
<path d="M1130.3,255.1L1134.4,256.9L1134.9,267.6L1130.8,265.7Z" fill="#1d1e21"/>
<path d="M1131.3,258.5L1132.2,258.9L1132.4,262.2L1131.4,261.8Z" fill="#b4b4c2"/>
<path d="M1132.8,259.2L1133.7,259.6L1133.8,262.9L1133.0,262.5Z" fill="#8f90a4"/>
<path d="M1131.3,275.0L1135.3,276.9L1135.8,287.3L1131.8,285.2Z" fill="#1d1e21"/>
<path d="M1132.2,278.3L1133.2,278.8L1133.3,281.8L1132.4,281.3Z" fill="#b4b4c2"/>
<path d="M1133.7,279.1L1134.6,279.5L1134.8,282.5L1133.9,282.1Z" fill="#8f90a4"/>
<path d="M1134.9,225.6L1136.0,226.0L1138.8,290.2L1137.8,289.6Z" fill="#9a4424"/>
<path d="M1136.0,226.0L1145.9,229.5L1148.4,294.5L1138.8,289.5Z" fill="#33231e"/>
<path d="M1136.0,226.3L1145.9,229.8L1146.3,240.1L1136.4,236.4Z" fill="#383b3f"/>
<path d="M1136.6,239.1L1146.4,242.9L1146.9,255.3L1137.1,251.2Z" fill="#1d1e21"/>
<path d="M1138.7,242.9L1141.0,243.8L1141.2,248.6L1138.9,247.6Z" fill="#b4b4c2"/>
<path d="M1142.4,244.4L1144.6,245.2L1144.8,250.0L1142.6,249.1Z" fill="#8f90a4"/>
<path d="M1137.4,258.2L1147.2,262.5L1147.6,273.5L1137.9,269.0Z" fill="#1d1e21"/>
<path d="M1139.5,262.1L1141.8,263.2L1142.0,266.6L1139.6,265.5Z" fill="#b4b4c2"/>
<path d="M1143.2,263.8L1145.3,264.7L1145.5,268.1L1143.3,267.2Z" fill="#8f90a4"/>
<path d="M1138.3,278.4L1148.0,283.1L1148.4,293.8L1138.8,288.8Z" fill="#1d1e21"/>
<path d="M1140.4,282.4L1142.7,283.5L1142.8,286.6L1140.5,285.4Z" fill="#b4b4c2"/>
<path d="M1144.0,284.2L1146.2,285.3L1146.3,288.4L1144.2,287.3Z" fill="#8f90a4"/>
<path d="M1147.6,230.1L1148.7,230.4L1151.2,296.6L1150.1,296.0Z" fill="#9a4424"/>
<path d="M1148.7,230.4L1158.3,233.8L1160.5,300.8L1151.1,295.9Z" fill="#33231e"/>
<path d="M1148.7,230.8L1158.3,234.2L1158.6,244.8L1149.1,241.2Z" fill="#383b3f"/>
<path d="M1149.2,244.0L1158.7,247.6L1159.1,260.4L1149.7,256.4Z" fill="#1d1e21"/>
<path d="M1151.2,247.8L1153.5,248.7L1153.7,253.6L1151.4,252.7Z" fill="#b4b4c2"/>
<path d="M1154.8,249.2L1156.9,250.1L1157.1,255.0L1155.0,254.2Z" fill="#8f90a4"/>
<path d="M1149.9,263.7L1159.4,267.8L1159.8,279.2L1150.3,274.8Z" fill="#1d1e21"/>
<path d="M1151.9,267.7L1154.2,268.7L1154.3,272.2L1152.1,271.1Z" fill="#b4b4c2"/>
<path d="M1155.5,269.2L1157.6,270.2L1157.7,273.7L1155.6,272.8Z" fill="#8f90a4"/>
<path d="M1150.7,284.5L1160.1,289.1L1160.4,300.0L1151.1,295.2Z" fill="#1d1e21"/>
<path d="M1152.7,288.5L1154.9,289.6L1155.1,292.8L1152.8,291.7Z" fill="#b4b4c2"/>
<path d="M1156.2,290.3L1158.3,291.3L1158.4,294.5L1156.4,293.5Z" fill="#8f90a4"/>
<path d="M1160.4,234.6L1161.5,234.9L1163.6,303.1L1162.5,302.5Z" fill="#9a4424"/>
<path d="M1161.5,234.9L1171.1,238.3L1172.9,307.2L1163.6,302.4Z" fill="#33231e"/>
<path d="M1161.5,235.3L1171.1,238.7L1171.4,249.6L1161.8,246.0Z" fill="#383b3f"/>
<path d="M1161.9,248.9L1171.4,252.5L1171.8,265.7L1162.3,261.7Z" fill="#1d1e21"/>
<path d="M1163.9,252.8L1166.2,253.7L1166.3,258.8L1164.1,257.8Z" fill="#b4b4c2"/>
<path d="M1167.5,254.2L1169.6,255.1L1169.8,260.2L1167.7,259.3Z" fill="#8f90a4"/>
<path d="M1162.5,269.2L1172.0,273.3L1172.3,285.0L1162.9,280.6Z" fill="#1d1e21"/>
<path d="M1164.5,273.2L1166.8,274.2L1166.9,277.9L1164.6,276.8Z" fill="#b4b4c2"/>
<path d="M1168.1,274.8L1170.2,275.8L1170.3,279.4L1168.2,278.4Z" fill="#8f90a4"/>
<path d="M1163.2,290.6L1172.6,295.2L1172.9,306.5L1163.5,301.7Z" fill="#1d1e21"/>
<path d="M1165.2,294.7L1167.4,295.9L1167.5,299.1L1165.3,298.0Z" fill="#b4b4c2"/>
<path d="M1168.7,296.5L1170.8,297.5L1170.9,300.8L1168.8,299.8Z" fill="#8f90a4"/>
<path d="M1173.2,239.1L1174.3,239.4L1176.0,309.6L1175.0,309.0Z" fill="#9a4424"/>
<path d="M1174.3,239.4L1179.1,241.1L1180.7,311.3L1176.0,308.8Z" fill="#33231e"/>
<path d="M1174.3,239.8L1179.1,241.5L1179.3,252.6L1174.5,250.8Z" fill="#383b3f"/>
<path d="M1174.6,253.8L1179.4,255.6L1179.7,269.0L1174.9,267.0Z" fill="#1d1e21"/>
<path d="M1175.7,257.4L1176.8,257.9L1176.9,263.1L1175.8,262.6Z" fill="#b4b4c2"/>
<path d="M1177.5,258.2L1178.5,258.6L1178.6,263.8L1177.6,263.3Z" fill="#8f90a4"/>
<path d="M1175.1,274.7L1179.9,276.8L1180.1,288.6L1175.4,286.4Z" fill="#1d1e21"/>
<path d="M1176.2,278.4L1177.3,278.9L1177.4,282.6L1176.3,282.1Z" fill="#b4b4c2"/>
<path d="M1178.0,279.2L1179.0,279.7L1179.1,283.4L1178.1,282.9Z" fill="#8f90a4"/>
<path d="M1175.7,296.7L1180.4,299.0L1180.6,310.5L1176.0,308.1Z" fill="#1d1e21"/>
<path d="M1176.7,300.5L1177.8,301.1L1177.9,304.4L1176.8,303.8Z" fill="#b4b4c2"/>
<path d="M1178.5,301.4L1179.5,301.9L1179.6,305.2L1178.6,304.7Z" fill="#8f90a4"/>
<path d="M1181.8,242.1L1182.9,242.5L1184.5,314.0L1183.4,313.4Z" fill="#9a4424"/>
<path d="M1182.9,242.5L1193.2,246.1L1194.5,318.4L1184.5,313.2Z" fill="#33231e"/>
<path d="M1183.0,242.9L1193.2,246.5L1193.4,258.0L1183.2,254.1Z" fill="#383b3f"/>
<path d="M1183.3,257.1L1193.5,261.0L1193.7,274.8L1183.5,270.6Z" fill="#1d1e21"/>
<path d="M1185.4,261.3L1187.8,262.2L1187.9,267.5L1185.5,266.5Z" fill="#b4b4c2"/>
<path d="M1189.3,262.8L1191.5,263.7L1191.6,269.0L1189.4,268.1Z" fill="#8f90a4"/>
<path d="M1183.7,278.4L1193.9,282.9L1194.1,295.1L1184.0,290.4Z" fill="#1d1e21"/>
<path d="M1185.8,282.7L1188.2,283.8L1188.3,287.6L1185.9,286.5Z" fill="#b4b4c2"/>
<path d="M1189.7,284.4L1191.9,285.4L1192.0,289.2L1189.7,288.2Z" fill="#8f90a4"/>
<path d="M1184.2,300.9L1194.2,305.8L1194.4,317.7L1184.4,312.5Z" fill="#1d1e21"/>
<path d="M1186.3,305.2L1188.7,306.4L1188.7,309.9L1186.3,308.6Z" fill="#b4b4c2"/>
<path d="M1190.1,307.1L1192.3,308.2L1192.4,311.7L1190.1,310.6Z" fill="#8f90a4"/>
<path d="M1203.4,249.7L1204.5,250.1L1205.4,324.9L1204.4,324.4Z" fill="#9a4424"/>
<path d="M1204.5,250.1L1216.6,254.4L1217.2,330.2L1205.4,324.1Z" fill="#33231e"/>
<path d="M1204.5,250.5L1216.6,254.8L1216.7,266.8L1204.7,262.2Z" fill="#383b3f"/>
<path d="M1204.7,265.4L1216.7,270.0L1216.8,284.5L1204.9,279.5Z" fill="#1d1e21"/>
<path d="M1207.2,269.9L1210.0,271.0L1210.1,276.5L1207.2,275.4Z" fill="#b4b4c2"/>
<path d="M1211.7,271.6L1214.4,272.7L1214.4,278.3L1211.8,277.2Z" fill="#8f90a4"/>
<path d="M1205.0,287.7L1216.9,292.9L1217.0,305.8L1205.1,300.2Z" fill="#1d1e21"/>
<path d="M1207.4,292.3L1210.3,293.6L1210.3,297.5L1207.5,296.2Z" fill="#b4b4c2"/>
<path d="M1211.9,294.3L1214.6,295.5L1214.6,299.5L1212.0,298.3Z" fill="#8f90a4"/>
<path d="M1205.3,311.2L1217.1,317.0L1217.2,329.4L1205.4,323.4Z" fill="#1d1e21"/>
<path d="M1207.7,315.9L1210.5,317.3L1210.5,320.9L1207.7,319.5Z" fill="#b4b4c2"/>
<path d="M1212.2,318.1L1214.8,319.4L1214.8,323.0L1212.2,321.7Z" fill="#8f90a4"/>
<path d="M1219.4,255.3L1220.5,255.7L1221.0,333.0L1219.9,332.5Z" fill="#9a4424"/>
<path d="M1220.5,255.7L1226.6,257.9L1226.9,335.3L1221.0,332.2Z" fill="#33231e"/>
<path d="M1220.5,256.1L1226.6,258.3L1226.7,270.6L1220.6,268.3Z" fill="#383b3f"/>
<path d="M1220.6,271.5L1226.7,273.9L1226.7,288.6L1220.7,286.1Z" fill="#1d1e21"/>
<path d="M1221.8,275.6L1223.3,276.2L1223.3,281.9L1221.9,281.3Z" fill="#b4b4c2"/>
<path d="M1224.1,276.5L1225.5,277.1L1225.5,282.8L1224.2,282.2Z" fill="#8f90a4"/>
<path d="M1220.7,294.6L1226.8,297.2L1226.8,310.3L1220.8,307.5Z" fill="#1d1e21"/>
<path d="M1222.0,298.8L1223.4,299.4L1223.4,303.5L1222.0,302.8Z" fill="#b4b4c2"/>
<path d="M1224.2,299.8L1225.6,300.4L1225.6,304.4L1224.3,303.8Z" fill="#8f90a4"/>
<path d="M1220.9,318.9L1226.8,321.8L1226.9,334.5L1221.0,331.4Z" fill="#1d1e21"/>
<path d="M1222.1,323.1L1223.5,323.8L1223.5,327.5L1222.1,326.7Z" fill="#b4b4c2"/>
<path d="M1224.4,324.2L1225.7,324.9L1225.7,328.6L1224.4,327.9Z" fill="#8f90a4"/>
<path d="M1185.1,293.2L1192.9,296.8L1193.3,317.4L1185.5,313.4Z" fill="#45484a"/>
<path d="M1078.1,205.6L1079.3,206.0L1083.8,261.4L1082.6,260.8Z" fill="#e98453" opacity="0.85"/>
<path d="M1087.6,209.0L1088.8,209.4L1093.0,266.3L1091.8,265.6Z" fill="#e98453" opacity="0.85"/>
<path d="M1097.6,212.5L1098.8,212.9L1102.7,271.3L1101.5,270.7Z" fill="#e98453" opacity="0.85"/>
<path d="M1107.3,215.9L1108.5,216.3L1112.1,276.2L1111.0,275.6Z" fill="#e98453" opacity="0.85"/>
<path d="M1117.0,219.3L1118.2,219.7L1121.5,281.1L1120.4,280.5Z" fill="#e98453" opacity="0.85"/>
<path d="M1126.7,222.7L1127.9,223.1L1131.0,286.1L1129.8,285.5Z" fill="#e98453" opacity="0.85"/>
<path d="M1133.1,225.0L1134.3,225.4L1137.2,289.3L1136.0,288.7Z" fill="#e98453" opacity="0.85"/>
<path d="M1146.1,229.5L1147.3,230.0L1149.8,295.9L1148.6,295.3Z" fill="#e98453" opacity="0.85"/>
<path d="M1158.5,233.9L1159.7,234.3L1161.8,302.2L1160.7,301.6Z" fill="#e98453" opacity="0.85"/>
<path d="M1171.3,238.4L1172.5,238.8L1174.3,308.7L1173.1,308.1Z" fill="#e98453" opacity="0.85"/>
<path d="M1179.3,241.2L1180.4,241.6L1182.0,312.7L1180.9,312.1Z" fill="#e98453" opacity="0.85"/>
<path d="M1193.4,246.2L1194.6,246.6L1195.8,319.9L1194.7,319.3Z" fill="#e98453" opacity="0.85"/>
<path d="M1216.8,254.4L1218.0,254.9L1218.6,331.8L1217.4,331.2Z" fill="#e98453" opacity="0.85"/>
<path d="M1226.8,257.9L1228.0,258.4L1228.3,336.8L1227.1,336.2Z" fill="#e98453" opacity="0.85"/>
<path d="M1039.7,190.6L1237.0,259.0L1237.0,261.5L1039.9,192.1Z" fill="#a8441f"/>
<path d="M1043.5,211.4L1237.3,294.4L1237.3,298.0L1043.5,215.0Z" fill="#808284"/>
<path d="M1043.5,211.4L1237.3,294.4L1237.3,296.4L1043.5,213.4Z" fill="#e9e9ea"/>
<path d="M1045.0,227.4L1237.4,319.2L1237.4,322.8L1045.0,231.0Z" fill="#808284"/>
<path d="M1045.0,227.4L1237.4,319.2L1237.4,321.2L1045.0,229.4Z" fill="#e9e9ea"/>
<path d="M1066.0,240.0L1078.0,245.5L1077.0,250.0L1065.0,244.5Z" fill="#2c2e30"/>
<path d="M1237.0,259.0L1237.5,342.9" fill="none" stroke="#8a3d1e" stroke-width="0.8"/>
<path d="M1228.5,257.0L1229.0,338.5" fill="none" stroke="#b4552f" stroke-width="0.7"/>
<path d="M1237.0,259.0L1264.5,248.2L1267.3,246.5L1267.5,213.8L1380.2,168.9L1378.5,237.4L1237.5,342.9Z" fill="#ee8a5c"/>
<path d="M1252.0,253.0L1252.0,332.0" fill="none" stroke="#c0623c" stroke-width="0.7"/>
<path d="M1270.3,223.8L1277.2,220.8L1277.2,244.5L1270.3,248.1Z" fill="#262a30"/>
<path d="M1271.1,225.0L1276.6,222.6L1276.6,234.0L1271.1,236.6Z" fill="#454c56"/>
<path d="M1270.3,252.3L1277.2,248.7L1277.2,267.2L1270.3,271.3Z" fill="#2a2d33"/>
<path d="M1270.3,277.7L1277.2,273.4L1277.2,290.0L1270.3,294.6Z" fill="#2c3036"/>
<path d="M1270.3,300.4L1277.2,295.6L1277.2,309.6L1270.3,314.7Z" fill="#30343a"/>
<path d="M1271.3,278.6L1276.2,275.6L1276.2,282.9L1271.3,286.0Z" fill="#8e90aa"/>
<path d="M1280.6,219.3L1287.2,216.4L1287.2,239.4L1280.6,242.8Z" fill="#262a30"/>
<path d="M1281.4,220.5L1286.6,218.2L1286.6,229.2L1281.4,231.7Z" fill="#454c56"/>
<path d="M1280.6,246.9L1287.2,243.4L1287.2,261.3L1280.6,265.2Z" fill="#2a2d33"/>
<path d="M1280.6,271.3L1287.2,267.3L1287.2,283.3L1280.6,287.7Z" fill="#2c3036"/>
<path d="M1280.6,293.3L1287.2,288.7L1287.2,302.2L1280.6,307.1Z" fill="#30343a"/>
<path d="M1281.6,272.3L1286.2,269.4L1286.2,276.4L1281.6,279.4Z" fill="#8e90aa"/>
<path d="M1290.6,214.9L1296.8,212.2L1296.8,234.4L1290.6,237.6Z" fill="#262a30"/>
<path d="M1291.4,216.1L1296.2,214.0L1296.2,224.6L1291.4,226.9Z" fill="#454c56"/>
<path d="M1290.6,241.6L1296.8,238.3L1296.8,255.6L1290.6,259.3Z" fill="#2a2d33"/>
<path d="M1290.6,265.2L1296.8,261.4L1296.8,276.8L1290.6,281.0Z" fill="#2c3036"/>
<path d="M1290.6,286.4L1296.8,282.1L1296.8,295.1L1290.6,299.7Z" fill="#30343a"/>
<path d="M1291.6,266.1L1295.8,263.5L1295.8,270.2L1291.6,272.9Z" fill="#8e90aa"/>
<path d="M1268.2,251.8L1269.6,251.1L1269.6,315.7L1268.2,316.7Z" fill="#5a2c18"/>
<path d="M1306.3,201.1L1360.3,179.0L1355.1,253.8L1301.1,293.9Z" fill="#26262a"/>
<path d="M1306.4,199.7L1309.4,198.5L1304.0,292.2L1301.1,294.4Z" fill="#8c3f1f"/>
<path d="M1306.4,199.7L1308.2,199.0L1302.9,293.0L1301.1,294.4Z" fill="#d9703f"/>
<path d="M1306.4,199.7L1307.2,199.4L1301.8,293.8L1301.1,294.4Z" fill="#ee8a5c"/>
<path d="M1309.6,201.6L1312.4,200.4L1311.0,223.9L1308.2,225.3Z" fill="#40464f"/>
<path d="M1306.7,252.1L1309.5,250.4L1308.6,265.7L1305.8,267.6Z" fill="#30343a"/>
<path d="M1312.8,197.1L1315.6,196.0L1310.3,287.5L1307.5,289.6Z" fill="#8c3f1f"/>
<path d="M1312.8,197.1L1314.6,196.4L1309.2,288.3L1307.5,289.6Z" fill="#d9703f"/>
<path d="M1312.8,197.1L1313.5,196.8L1308.2,289.1L1307.5,289.6Z" fill="#ee8a5c"/>
<path d="M1315.8,199.0L1318.5,197.9L1317.2,220.8L1314.5,222.2Z" fill="#40464f"/>
<path d="M1312.9,248.3L1315.6,246.7L1314.7,261.7L1312.0,263.4Z" fill="#30343a"/>
<path d="M1318.9,194.6L1321.6,193.6L1316.3,283.1L1313.6,285.1Z" fill="#8c3f1f"/>
<path d="M1318.9,194.6L1320.6,194.0L1315.2,283.8L1313.6,285.1Z" fill="#d9703f"/>
<path d="M1318.9,194.6L1319.6,194.4L1314.2,284.6L1313.6,285.1Z" fill="#ee8a5c"/>
<path d="M1321.8,196.5L1324.4,195.5L1323.0,217.9L1320.4,219.1Z" fill="#40464f"/>
<path d="M1318.9,244.7L1321.5,243.2L1320.6,257.8L1318.0,259.5Z" fill="#30343a"/>
<path d="M1324.8,192.3L1327.3,191.2L1322.0,278.8L1319.4,280.7Z" fill="#8c3f1f"/>
<path d="M1324.8,192.3L1326.4,191.6L1321.0,279.5L1319.4,280.7Z" fill="#d9703f"/>
<path d="M1324.8,192.3L1325.4,192.0L1320.0,280.2L1319.4,280.7Z" fill="#ee8a5c"/>
<path d="M1327.5,194.2L1329.9,193.2L1328.6,215.1L1326.2,216.3Z" fill="#40464f"/>
<path d="M1324.6,241.3L1327.0,239.9L1326.2,254.2L1323.7,255.7Z" fill="#30343a"/>
<path d="M1330.3,190.0L1332.8,189.0L1327.4,274.7L1325.0,276.6Z" fill="#8c3f1f"/>
<path d="M1330.3,190.0L1331.9,189.4L1326.5,275.4L1325.0,276.6Z" fill="#d9703f"/>
<path d="M1330.3,190.0L1331.0,189.8L1325.6,276.1L1325.0,276.6Z" fill="#ee8a5c"/>
<path d="M1333.0,191.9L1335.3,190.9L1333.9,212.4L1331.6,213.5Z" fill="#40464f"/>
<path d="M1330.1,238.0L1332.4,236.7L1331.5,250.7L1329.2,252.2Z" fill="#30343a"/>
<path d="M1335.7,187.9L1338.0,186.9L1332.6,270.9L1330.3,272.6Z" fill="#8c3f1f"/>
<path d="M1335.7,187.9L1337.1,187.3L1331.8,271.5L1330.3,272.6Z" fill="#d9703f"/>
<path d="M1335.7,187.9L1336.2,187.6L1330.9,272.2L1330.3,272.6Z" fill="#ee8a5c"/>
<path d="M1338.2,189.7L1340.4,188.8L1339.0,209.8L1336.8,210.9Z" fill="#40464f"/>
<path d="M1335.3,234.9L1337.4,233.6L1336.6,247.3L1334.4,248.7Z" fill="#30343a"/>
<path d="M1340.7,185.8L1343.0,184.9L1337.6,267.1L1335.4,268.8Z" fill="#8c3f1f"/>
<path d="M1340.7,185.8L1342.1,185.3L1336.8,267.8L1335.4,268.8Z" fill="#d9703f"/>
<path d="M1340.7,185.8L1341.3,185.6L1335.9,268.4L1335.4,268.8Z" fill="#ee8a5c"/>
<path d="M1343.2,187.7L1345.2,186.8L1343.8,207.4L1341.8,208.4Z" fill="#40464f"/>
<path d="M1340.3,231.9L1342.3,230.7L1341.4,244.1L1339.4,245.5Z" fill="#30343a"/>
<path d="M1345.6,183.9L1347.7,183.0L1342.4,263.6L1340.2,265.2Z" fill="#8c3f1f"/>
<path d="M1345.6,183.9L1346.9,183.3L1341.6,264.2L1340.2,265.2Z" fill="#d9703f"/>
<path d="M1345.6,183.9L1346.1,183.7L1340.8,264.8L1340.2,265.2Z" fill="#ee8a5c"/>
<path d="M1347.9,185.7L1349.8,184.9L1348.5,205.0L1346.6,206.0Z" fill="#40464f"/>
<path d="M1345.0,229.0L1346.9,227.9L1346.1,241.1L1344.1,242.3Z" fill="#30343a"/>
<path d="M1350.2,182.0L1352.3,181.2L1346.9,260.2L1344.9,261.7Z" fill="#8c3f1f"/>
<path d="M1350.2,182.0L1351.5,181.5L1346.1,260.8L1344.9,261.7Z" fill="#d9703f"/>
<path d="M1350.2,182.0L1350.7,181.8L1345.4,261.4L1344.9,261.7Z" fill="#ee8a5c"/>
<path d="M1352.5,183.8L1354.3,183.0L1352.9,202.8L1351.1,203.7Z" fill="#40464f"/>
<path d="M1349.6,226.3L1351.4,225.2L1350.5,238.2L1348.7,239.3Z" fill="#30343a"/>
<path d="M1354.7,180.2L1356.6,179.4L1351.3,257.0L1349.3,258.4Z" fill="#8c3f1f"/>
<path d="M1354.7,180.2L1355.9,179.7L1350.5,257.5L1349.3,258.4Z" fill="#d9703f"/>
<path d="M1354.7,180.2L1355.2,180.0L1349.8,258.1L1349.3,258.4Z" fill="#ee8a5c"/>
<path d="M1356.8,182.0L1358.5,181.3L1357.1,200.7L1355.4,201.5Z" fill="#40464f"/>
<path d="M1353.9,223.7L1355.6,222.7L1354.7,235.4L1353.0,236.5Z" fill="#30343a"/>
<path d="M1358.9,178.5L1359.6,178.2L1354.2,254.8L1353.5,255.3Z" fill="#8c3f1f"/>
<path d="M1358.9,178.5L1359.3,178.3L1354.0,255.0L1353.5,255.3Z" fill="#d9703f"/>
<path d="M1358.9,178.5L1359.1,178.4L1353.7,255.2L1353.5,255.3Z" fill="#ee8a5c"/>
<path d="M1359.8,180.7L1360.0,180.7L1358.6,199.9L1358.4,200.0Z" fill="#40464f"/>
<path d="M1356.9,221.9L1357.1,221.8L1356.2,234.4L1356.0,234.5Z" fill="#30343a"/>
<path d="M1360.2,176.9L1365.4,174.8L1365.4,247.2L1360.2,251.1Z" fill="#ee8a5c"/>
<path d="M1365.4,179.1L1378.8,173.5L1378.8,235.1L1365.4,245.0Z" fill="#2a2627"/>
<path d="M1365.4,177.0L1367.1,176.3L1367.1,245.2L1365.4,246.5Z" fill="#d06a40"/>
<path d="M1369.2,175.4L1370.8,174.8L1370.8,242.4L1369.2,243.6Z" fill="#d06a40"/>
<path d="M1372.8,173.9L1374.2,173.4L1374.2,239.9L1372.8,240.9Z" fill="#d06a40"/>
<path d="M1376.0,172.6L1377.3,172.1L1377.3,237.6L1376.0,238.6Z" fill="#d06a40"/>
<path d="M1365.4,194.3L1378.8,187.7L1378.8,190.8L1365.4,197.6Z" fill="#ee8a5c"/>
<path d="M1380.2,182.5L1386.8,183.4L1384.6,231.0L1378.6,236.6Z" fill="#ec8558"/>
<path d="M1380.2,182.5L1386.8,183.4L1386.6,186.0L1380.2,185.4Z" fill="#b0502b"/>
<path d="M1380.2,170.0L1378.8,236.0" fill="none" stroke="#8a3d1e" stroke-width="0.9"/>
<path d="M1267.5,213.8L1380.2,168.9" fill="none" stroke="#7a3216" stroke-width="1.7"/>
<path d="M1268.0,216.4L1380.0,171.6" fill="none" stroke="#b85a34" stroke-width="0.7"/>
<path d="M1237.0,259.0L1264.5,248.2" fill="none" stroke="#8a3d1e" stroke-width="1.2"/>
<path d="M1267.5,213.8L1267.3,246.5" fill="none" stroke="#8a3d1e" stroke-width="1.0"/>
<path d="M1267.6,246.0L1267.9,318.0" fill="none" stroke="#a04a28" stroke-width="0.9"/>
<path d="M1237.3,294.2L1385.0,202.6L1385.0,206.2L1237.3,297.8Z" fill="#85878a"/>
<path d="M1237.3,294.2L1385.0,202.6L1385.0,204.6L1237.3,296.2Z" fill="#e9e9ea"/>
<path d="M1237.4,319.0L1384.0,217.2L1384.0,220.8L1237.4,322.6Z" fill="#85878a"/>
<path d="M1237.4,319.0L1384.0,217.2L1384.0,219.2L1237.4,321.0Z" fill="#e9e9ea"/>
<path d="M1253.0,306.0L1279.0,291.5L1282.0,295.0L1256.0,311.0Z" fill="#25272a"/>
<path d="M1256.0,304.8L1278.0,292.8L1279.5,295.0L1258.0,307.5Z" fill="#b7b9dc"/>
<path d="M1350.0,239.5L1365.0,232.5L1367.0,236.0L1352.0,243.5Z" fill="#2b2d30"/>
<path d="M1352.0,239.0L1364.5,233.4L1365.4,235.2L1353.0,240.8Z" fill="#b7b9dc"/>
<path d="M1312.7,265.0L1331.0,258.5L1331.0,301.0L1312.7,305.0Z" fill="#383332"/>
<path d="M1312.7,265.0L1319.5,262.6L1319.5,290.0L1312.7,292.5Z" fill="#29292b"/>
<path d="M1319.5,257.6L1329.3,254.2L1329.3,279.4L1319.5,281.4Z" fill="#3f4245"/>
<path d="M1325.5,256.0L1329.3,254.4L1329.3,279.4L1325.5,280.4Z" fill="#2c2e30"/>
<path d="M1319.6,278.2L1326.6,276.6L1326.6,286.6L1319.6,288.2Z" fill="#d6d6da"/>
<path d="M1320.8,279.6L1325.4,285.6" fill="none" stroke="#2a2a2a" stroke-width="0.9"/>
<path d="M1325.4,279.0L1320.8,286.4" fill="none" stroke="#2a2a2a" stroke-width="0.9"/>
<path d="M1316.2,291.0L1316.2,309.0" fill="none" stroke="#8c8c8c" stroke-width="1.8"/>
<path d="M1319.8,289.0L1319.8,312.0" fill="none" stroke="#8c8c8c" stroke-width="1.8"/>
<path d="M1323.2,288.0L1323.2,311.0" fill="none" stroke="#8c8c8c" stroke-width="1.8"/>
<path d="M1326.4,287.5L1326.4,308.0" fill="none" stroke="#8c8c8c" stroke-width="1.8"/>
<path d="M1330.5,262.5L1380.0,234.5L1378.4,248.6L1333.6,279.2Z" fill="#45484a"/>
<path d="M1330.5,262.5L1333.6,264.6L1333.6,279.2L1330.5,276.6Z" fill="#36383a"/>
<path d="M1331.0,262.2L1340.0,257.2L1340.0,259.4L1331.0,264.4Z" fill="#d9902c"/>
<path d="M1357.0,248.6L1379.6,235.4L1379.6,237.4L1357.0,250.8Z" fill="#b9703a"/>
<path d="M1333.6,279.2L1378.4,248.6" fill="none" stroke="#2c2e30" stroke-width="1.0"/>
<path d="M1340.0,268.0L1352.0,262.5L1356.0,270.0L1344.0,277.0Z" fill="#77797c"/>
<path d="M1344.0,262.4L1352.0,258.6L1353.0,260.6L1345.0,264.6Z" fill="#b9badb"/>
<path d="M1043.5,191.6L1211.5,158.5L1300.0,169.0L1267.0,214.0L1262.0,247.5L1236.5,257.0Z" fill="#c4c5e0"/>
<path d="M1039.7,190.6L1211.9,156.2L1212.0,159.0L1054.0,193.2L1044.0,192.4Z" fill="#f2915f"/>
<path d="M1054.0,193.2L1212.0,159.0L1212.0,161.2L1058.0,194.8Z" fill="#b65a3a"/>
<path d="M1211.9,156.2L1286.0,165.8L1286.0,169.4L1212.0,159.4Z" fill="#f2915f"/>
<path d="M1212.0,159.4L1286.0,169.4L1286.0,172.0L1213.0,162.4Z" fill="#c46a44"/>
<path d="M1039.7,190.6L1211.9,156.2L1286.0,165.8" fill="none" stroke="#7a3216" stroke-width="1.2"/>
<path d="M1213.0,162.4L1286.0,172.0L1262.0,182.2L1204.0,166.6Z" fill="#c4c5e0"/>
<path d="M1075.0,198.6L1180.0,177.5" fill="none" stroke="#9a6f66" stroke-width="0.6" opacity="0.75"/>
<path d="M1092.0,205.5L1180.0,187.5" fill="none" stroke="#9a6f66" stroke-width="0.6" opacity="0.75"/>
<path d="M1110.0,212.3L1150.0,204.0" fill="none" stroke="#9a6f66" stroke-width="0.6" opacity="0.75"/>
<path d="M1125.0,218.3L1185.0,206.0" fill="none" stroke="#9a6f66" stroke-width="0.6" opacity="0.75"/>
<path d="M1112.0,189.8L1166.0,209.0" fill="none" stroke="#9a6f66" stroke-width="0.6" opacity="0.75"/>
<path d="M1140.0,184.5L1186.0,200.0" fill="none" stroke="#9a6f66" stroke-width="0.6" opacity="0.75"/>
<path d="M1088.0,194.5L1135.0,211.0" fill="none" stroke="#9a6f66" stroke-width="0.6" opacity="0.75"/>
<path d="M1160.0,222.0L1183.0,230.0" fill="none" stroke="#9a6f66" stroke-width="0.6" opacity="0.75"/>
<path d="M1100.0,200.5L1183.0,222.0" fill="none" stroke="#9a6f66" stroke-width="0.6" opacity="0.75"/>
<ellipse cx="1113" cy="197" rx="1.8" ry="0.9" fill="#8e90a4"/>
<ellipse cx="1128" cy="189" rx="1.8" ry="0.9" fill="#8e90a4"/>
<ellipse cx="1143" cy="186" rx="1.8" ry="0.9" fill="#8e90a4"/>
<ellipse cx="1157" cy="183" rx="1.8" ry="0.9" fill="#8e90a4"/>
<ellipse cx="1111" cy="202.5" rx="1.8" ry="0.9" fill="#8e90a4"/>
<ellipse cx="1125" cy="205.5" rx="1.8" ry="0.9" fill="#8e90a4"/>
<ellipse cx="1138" cy="209.5" rx="1.8" ry="0.9" fill="#8e90a4"/>
<ellipse cx="1151" cy="214" rx="1.8" ry="0.9" fill="#8e90a4"/>
<ellipse cx="1165" cy="219" rx="1.8" ry="0.9" fill="#8e90a4"/>
<ellipse cx="1166" cy="227" rx="1.8" ry="0.9" fill="#8e90a4"/>
<ellipse cx="1181" cy="223" rx="1.8" ry="0.9" fill="#8e90a4"/>
<ellipse cx="1096" cy="197.5" rx="1.8" ry="0.9" fill="#8e90a4"/>
<path d="M1098.5,197.6L1148.0,187.6" fill="none" stroke="#1d1d1f" stroke-width="1.5"/>
<path d="M1121.0,194.0L1121.0,189.5" fill="none" stroke="#8b8c7e" stroke-width="1.2"/>
<path d="M1135.5,199.0L1135.5,194.0" fill="none" stroke="#8b8c7e" stroke-width="1.2"/>
<path d="M1113.0,199.8L1126.0,197.0L1136.0,199.6" fill="none" stroke="#8f9a96" stroke-width="0.9"/>
<path d="M1148.0,188.2L1196.0,177.6L1196.0,196.0L1182.5,203.5L1148.0,194.5Z" fill="#3a3f46"/>
<path d="M1151.0,188.1L1151.0,196.1" fill="none" stroke="#e4e4de" stroke-width="1.8"/>
<path d="M1157.4,186.7L1157.4,194.7" fill="none" stroke="#e4e4de" stroke-width="1.8"/>
<path d="M1163.8,185.2L1163.8,193.2" fill="none" stroke="#e4e4de" stroke-width="1.8"/>
<path d="M1170.2,183.8L1170.2,191.8" fill="none" stroke="#e4e4de" stroke-width="1.8"/>
<path d="M1176.6,182.3L1176.6,190.3" fill="none" stroke="#e4e4de" stroke-width="1.8"/>
<path d="M1183.0,180.8L1183.0,188.8" fill="none" stroke="#e4e4de" stroke-width="1.8"/>
<path d="M1189.4,179.4L1189.4,187.4" fill="none" stroke="#e4e4de" stroke-width="1.8"/>
<path d="M1148.0,189.4L1183.0,199.2L1183.0,205.2L1148.0,195.2Z" fill="#f6f6dc"/>
<path d="M1148.0,189.4L1183.0,199.2" fill="none" stroke="#6b6d5e" stroke-width="0.7"/>
<path d="M1216.5,171.4L1262.0,178.6L1252.0,186.4L1216.5,184.2Z" fill="#30343a"/>
<path d="M1218.0,172.6L1218.0,182.1" fill="none" stroke="#eeeeea" stroke-width="2.2"/>
<path d="M1222.5,173.8L1222.5,182.9" fill="none" stroke="#eeeeea" stroke-width="2.2"/>
<path d="M1228.0,174.9L1228.0,183.8" fill="none" stroke="#eeeeea" stroke-width="1.6"/>
<path d="M1233.0,176.0L1233.0,184.6" fill="none" stroke="#eeeeea" stroke-width="1.6"/>
<path d="M1240.0,177.2L1240.0,185.5" fill="none" stroke="#eeeeea" stroke-width="1.6"/>
<path d="M1247.0,178.3L1247.0,186.3" fill="none" stroke="#eeeeea" stroke-width="1.6"/>
<path d="M1179.6,164.0L1190.0,162.6L1216.0,166.6L1216.0,186.4L1197.0,190.0L1180.0,196.0Z" fill="#d9693f"/>
<path d="M1179.6,164.0L1190.0,162.6L1216.0,166.6L1206.0,168.4Z" fill="#ef8c5c"/>
<path d="M1179.6,164.0L1206.0,168.4L1206.0,170.0L1179.6,165.8Z" fill="#a84a28"/>
<path d="M1206.4,171.2L1212.8,170.4L1212.8,185.2L1206.4,186.6Z" fill="#1f2023"/>
<path d="M1207.6,172.2L1211.6,171.8L1211.6,177.5L1207.6,178.0Z" fill="#9b5a48"/>
<path d="M1179.8,164.0L1180.2,196.0" fill="none" stroke="#8a3d1e" stroke-width="1.0"/>
<path d="M1197.0,166.8L1197.0,189.6" fill="none" stroke="#a84e2c" stroke-width="0.8"/>
<path d="M1206.0,168.4L1206.0,188.0" fill="none" stroke="#8a3d1e" stroke-width="0.9"/>
<path d="M1216.0,166.6L1216.0,186.4" fill="none" stroke="#8a3d1e" stroke-width="0.9"/>
<path d="M1181.5,173.4L1185.8,172.8L1185.8,180.6L1181.5,181.4Z" fill="#b77b68"/>
<path d="M1182.7,194.3L1267.5,213.8L1267.0,246.8L1182.9,231.3Z" fill="#d66a41"/>
<path d="M1182.8,206.6L1267.3,226.4" fill="none" stroke="#9c4523" stroke-width="0.8"/>
<path d="M1182.7,194.3L1182.9,231.3" fill="none" stroke="#8a3d1e" stroke-width="1.1"/>
<path d="M1267.5,213.8L1267.0,246.8" fill="none" stroke="#8a3d1e" stroke-width="1.1"/>
<path d="M1188.2,221.0L1192.2,221.8L1192.2,234.0L1188.2,233.0Z" fill="#c89a8e"/>
<path d="M1193.0,222.0L1196.4,222.8L1196.4,234.6L1193.0,234.0Z" fill="#8f5a49"/>
<path d="M1204.8,197.4L1227.2,191.4L1242.4,193.0L1305.3,166.6L1312.0,165.8L1361.5,172.8L1267.4,212.6Z" fill="#bdbfdc"/>
<path d="M1250.0,201.0L1330.0,170.0L1361.5,172.8L1267.4,212.6Z" fill="#b1b3d2" opacity="0.7"/>
<path d="M1182.7,194.3L1226.7,182.8L1227.4,191.4L1205.0,197.5L1186.5,195.4Z" fill="#ef8a5a"/>
<path d="M1226.7,182.8L1242.5,186.9L1242.5,194.6L1227.4,191.4Z" fill="#d8683e"/>
<path d="M1242.5,186.9L1303.7,167.9L1305.3,174.0L1242.5,194.6Z" fill="#ef8a5a"/>
<path d="M1286.0,166.0L1303.7,167.9L1305.3,174.0L1287.0,171.5Z" fill="#d8683e"/>
<path d="M1286.0,166.0L1312.0,159.6L1312.0,165.6L1305.5,167.6Z" fill="#ef8a5a"/>
<path d="M1312.0,159.6L1380.2,168.9L1362.0,173.2L1312.0,165.8Z" fill="#ee8858"/>
<path d="M1182.7,194.3L1226.7,182.8L1242.5,186.9L1303.7,167.9" fill="none" stroke="#7a3216" stroke-width="1.3"/>
<path d="M1286.0,166.0L1312.0,159.6L1380.2,168.9" fill="none" stroke="#7a3216" stroke-width="1.3"/>
<path d="M1286.0,166.0L1303.7,167.9" fill="none" stroke="#8a3d1e" stroke-width="0.8"/>
<path d="M1226.7,182.8L1226.7,191.0" fill="none" stroke="#8a3d1e" stroke-width="0.8"/>
<path d="M1242.5,186.9L1242.5,194.6" fill="none" stroke="#8a3d1e" stroke-width="0.9"/>
<path d="M1303.7,167.9L1304.5,174.0" fill="none" stroke="#8a3d1e" stroke-width="0.8"/>
<path d="M1186.5,195.6L1227.0,184.6L1242.5,188.6L1303.4,169.6" fill="none" stroke="#9a4422" stroke-width="0.8"/>
<path d="M1288.0,167.4L1312.0,161.4L1378.0,170.4" fill="none" stroke="#9a4422" stroke-width="0.8"/>
<path d="M1046.0,191.0L1211.8,157.9L1285.6,167.4" fill="none" stroke="#a44a26" stroke-width="0.8"/>
<path d="M1181.0,165.4L1191.0,163.9L1215.0,167.6" fill="none" stroke="#8a3d1e" stroke-width="0.9"/>
<path d="M1183.0,167.2L1205.0,170.6L1205.0,186.0" fill="none" stroke="#a04826" stroke-width="0.7"/>
<path d="M1182.7,194.3L1267.5,213.8" fill="none" stroke="#7a3216" stroke-width="1.6"/>
<path d="M1186.0,196.6L1267.4,215.4" fill="none" stroke="#a64b27" stroke-width="0.7"/>
<path d="M1245.5,198.6L1245.5,207.0" fill="none" stroke="#8b8b8b" stroke-width="1.4"/>
<circle cx="1308.6" cy="166" r="1.2" fill="#1c1c1c"/>
<circle cx="1218.8" cy="169.6" r="1.2" fill="#1c1c1c"/>
<path d="M1041.0,191.4L1236.8,259.6" fill="none" stroke="#7f3518" stroke-width="1.8"/>
<path d="M1045.0,191.2L1236.0,257.6" fill="none" stroke="#ef8a5a" stroke-width="1.3"/>
<path d="M1210.5,221.5L1210.5,214.2" fill="none" stroke="#1414ff" stroke-width="1.0"/>
<path d="M1210.5,221.5L1205.5,223.3" fill="none" stroke="#ff2020" stroke-width="1.0"/>
<path d="M1210.5,221.5L1216.0,223.0" fill="none" stroke="#20d020" stroke-width="1.0"/>
</svg>
<!-- BUILDING END -->
<!-- gizmo -->
<svg style="left:670px;top:245px" width="110" height="105" viewBox="670 245 110 105">
<circle cx="721.1" cy="295.9" r="46.5" fill="#2f2c2c"/>
<path d="M721.1,295.9V275" stroke="#0000f5" stroke-width="2"/>
<path d="M721.1,267.8L718.4,277H723.8Z" fill="#0000f5"/>
<path d="M721.1,295.9L704,301.4" stroke="#f00000" stroke-width="2"/>
<path d="M700,302.8L706.6,298.6L707.6,302.8Z" fill="#f00000"/>
<ellipse cx="704.8" cy="301.4" rx="3" ry="2.2" fill="#f00000"/>
<path d="M721.1,295.9L738,301" stroke="#00e000" stroke-width="2"/>
<path d="M745,303.6L736.4,303.8L737.8,298.2Z" fill="#00e000"/>
<ellipse cx="738.8" cy="301.2" rx="3" ry="2.4" fill="#00e000"/>
<circle cx="721.1" cy="295.9" r="4.2" fill="#9a9a9a"/>
<circle cx="720" cy="294.8" r="2" fill="#c4c4c4"/>
<text x="721.4" y="261.4" font-family="Liberation Sans, sans-serif" font-size="9.5" fill="#0000f5" stroke="#0000f5" stroke-width="0.4">Z</text>
<text x="693" y="306.8" font-family="Liberation Sans, sans-serif" font-size="9.5" fill="#f00000" stroke="#f00000" stroke-width="0.3">X</text>
<text x="751.8" y="304.6" font-family="Liberation Sans, sans-serif" font-size="9.5" fill="#00d000" stroke="#00d000" stroke-width="0.3">Y</text>
</svg>
<!-- nav cube -->
<svg style="left:1675px;top:75px" width="95" height="90" viewBox="1675 75 95 90">
<path d="M1682.9,87.6L1721.6,82L1761.8,86.6L1725.9,93.9Z" fill="#fdfdfd" stroke="#2e2b2b" stroke-width="0.7" stroke-linejoin="round"/>
<path d="M1682.9,87.6L1725.9,93.9L1725.5,158.6L1687.8,136.9Z" fill="#fbfbfb" stroke="#2e2b2b" stroke-width="0.7" stroke-linejoin="round"/>
<path d="M1725.9,93.9L1761.8,86.6L1757.2,134.5L1725.5,158.6Z" fill="#f6f6f6" stroke="#2e2b2b" stroke-width="0.7" stroke-linejoin="round"/>
<text transform="matrix(0.93,0.33,-0.08,1.5,1691.5,119)" font-family="Liberation Sans, sans-serif" font-size="7.8" fill="#8c8c8c" opacity="0.9">Справа</text>
<text transform="matrix(0.72,-0.42,-0.12,1.55,1736,130)" font-family="Liberation Sans, sans-serif" font-size="9" fill="#8c8c8c" opacity="0.9">Сзади</text>
</svg>

<!-- ================= BOTTOM PANEL ================= -->
<div id="bpanel" class="abs"></div>
<div class="abs teal" style="left:1231px;top:432px;width:42px;height:3px"></div>
<div class="t" style="left:715.5px;top:440px;font-size:14px;color:#f0f0f0;letter-spacing:0.15px">Коллизии (количество: 0)</div>
<div class="abs" style="left:671px;top:463px;width:60px;height:32px;background:#fff"></div>
<div class="abs" style="left:689px;top:471px;width:16px;height:16px;border:2px solid #3b95b3;border-radius:2.5px;background:#fff"></div>
<div class="th" style="left:731px;width:90px;border-left:none"></div>
<div class="th" style="left:821px;width:286px"></div>
<div class="th" style="left:1107px;width:193px"></div>
<div class="th" style="left:1300px;width:300px"></div>
<div class="th" style="left:1600px;width:190px"></div>
<div class="tht" style="left:748px;letter-spacing:-0.36px">Статус</div>
<div class="tht" style="left:837.6px;letter-spacing:-0.22px">Элемент (Модель A)</div>
<div class="tht" style="left:1123.4px;letter-spacing:-0.27px">Элемент (Модель B)</div>
<div class="tht" style="left:1315.4px;letter-spacing:-0.29px">GUID элемента (Модель A)</div>
<div class="tht" style="left:1615.6px;letter-spacing:-0.29px">GUID элемента (Модель B)</div>
<div class="abs" style="left:671px;top:495px;width:1119px;height:310px;background:#fff"></div>
<div class="abs" style="left:671px;top:494.5px;width:60px;height:1px;background:#ddd"></div>
<div class="t" style="left:1340.6px;top:504px;font-size:14px;color:#9a9a9a;letter-spacing:0.06px">Отсутствуют данные</div>
<div class="abs" style="left:671px;top:805px;width:1119px;height:8px;background:#686868;border-radius:0 0 4px 4px"></div>
<div class="abs teal" style="left:671px;top:805px;width:800px;height:8px;border-radius:0 0 0 4px"></div>


<!-- bottom panel header icons -->
<svg style="left:684px;top:439px" width="18" height="16" viewBox="0 0 18 16" fill="#ededed">
  <rect x="0.8" y="1" width="13.1" height="2"/><rect x="0.8" y="5.4" width="13.1" height="2"/><rect x="0.8" y="9.5" width="9.5" height="2"/>
  <path d="M11.9,9.4V15L16.9,12.2Z"/>
</svg>
<svg style="left:1615px;top:432px" width="160" height="30" viewBox="1615 432 160 30" fill="none" stroke="#ececec" stroke-linecap="butt" stroke-linejoin="round">
<rect x="1620.6" y="437.9" width="11.1" height="11" rx="1.8" stroke-width="1.5"/>
<rect x="1625.5" y="442.4" width="11.4" height="11.4" rx="1.8" stroke-width="1.5"/>
<path d="M1657.1,440H1671M1657.1,454.8H1671" stroke-width="2"/>
<path d="M1664,443.4V451.4" stroke-width="1.7"/>
<path d="M1661,445.6L1664,442.4L1667,445.6ZM1661,449.2L1664,452.4L1667,449.2Z" fill="#ececec" stroke-width="0.6"/>
<path d="M1690.9,447H1705" stroke-width="3.4"/>
<path d="M1690.9,447H1705" stroke="#bdbdbd" stroke-width="0.8"/>
<path d="M1698,438.2V442M1698,455.8V452" stroke-width="1.6"/>
<path d="M1695.2,440.6L1698,443.8L1700.8,440.6ZM1695.2,453.4L1698,450.2L1700.8,453.4Z" fill="#ececec" stroke-width="0.6"/>
</svg>
<svg style="left:1721.8px;top:436.6px" width="20.6" height="20.6" viewBox="0 0 24 24"><path fill="#ececec" d="M12,15.5A3.5,3.5 0 0,1 8.5,12A3.5,3.5 0 0,1 12,8.5A3.5,3.5 0 0,1 15.5,12A3.5,3.5 0 0,1 12,15.5M19.43,12.97C19.47,12.65 19.5,12.33 19.5,12C19.5,11.67 19.47,11.34 19.43,11L21.54,9.37C21.73,9.22 21.78,8.95 21.66,8.73L19.66,5.27C19.54,5.05 19.27,4.96 19.05,5.05L16.56,6.05C16.04,5.66 15.5,5.32 14.87,5.07L14.5,2.42C14.46,2.18 14.25,2 14,2H10C9.75,2 9.54,2.18 9.5,2.42L9.13,5.07C8.5,5.32 7.96,5.66 7.44,6.05L4.95,5.05C4.73,4.96 4.46,5.05 4.34,5.27L2.34,8.73C2.21,8.95 2.27,9.22 2.46,9.37L4.57,11C4.53,11.34 4.5,11.67 4.5,12C4.5,12.33 4.53,12.65 4.57,12.97L2.46,14.63C2.27,14.78 2.21,15.05 2.34,15.27L4.34,18.73C4.46,18.95 4.73,19.03 4.95,18.95L7.44,17.94C7.96,18.34 8.5,18.68 9.13,18.93L9.5,21.58C9.54,21.82 9.75,22 10,22H14C14.25,22 14.46,21.82 14.5,21.58L14.87,18.93C15.5,18.67 16.04,18.34 16.56,17.94L19.05,18.95C19.27,19.03 19.54,18.95 19.66,18.73L21.66,15.27C21.78,15.05 21.73,14.78 21.54,14.63L19.43,12.97Z"/></svg>
<svg style="left:1756.2px;top:437.7px" width="19.7" height="19.7" viewBox="0 0 24 24"><path fill="#ececec" d="M7.41,8.58L12,13.17L16.59,8.58L18,10L12,16L6,10L7.41,8.58Z"/></svg>

<!-- ================= RIGHT TOOLBAR ================= -->
<div id="rtool" class="abs"></div>
<div class="rsep" style="top:129.5px"></div>
<div class="rsep" style="top:398.5px"></div>
<div class="rsep" style="top:447.5px"></div>
<div class="rsep" style="top:628.5px"></div>
<div class="rsep" style="top:721.5px"></div>
<div class="abs" style="left:1800px;top:638px;width:32px;height:32px;background:#8b8b8b"></div>
<div class="abs" style="left:1800px;top:682px;width:32px;height:32px;background:#8b8b8b"></div>


<svg style="left:1798px;top:38px" width="36" height="777" viewBox="1798 38 36 777" fill="none" stroke="#e2e2e2" stroke-linecap="round" stroke-linejoin="round">
<!-- tree cloud -->
<path d="M1811.2,67.3H1809.6A4.6,4.6 0 0,1 1809.2,58.2A7.6,7.6 0 0,1 1823.6,57.6A4.9,4.9 0 0,1 1823.4,67.3H1821.6" stroke-width="1.5"/>
<path d="M1816.5,56.6V72.8M1811.2,60.8L1816.5,65M1821.4,64L1816.5,68" stroke-width="1.5"/>
<!-- monitor + focus -->
<path d="M1827.1,100.4V93.6H1803.3V110.6H1811.6V113.4H1808.2" stroke-width="1.2" stroke-linecap="butt" stroke-linejoin="miter"/>
<path d="M1813.3,106.4V102.1H1817.6M1824.4,102.1H1828.6V106.4M1828.6,114.2V118.5H1824.4M1817.6,118.5H1813.3V114.2" stroke-width="1.2" stroke-linecap="butt" stroke-linejoin="miter"/>
<path d="M1820.9,105.6L1825.1,108V113L1820.9,115.5L1816.7,113V108Z" fill="#e2e2e2" stroke="none"/>
<!-- ruler -->
<rect x="1803.7" y="150.6" width="24.8" height="7.4" stroke-width="1.3" stroke-linejoin="miter"/>
<path d="M1807.3,158V154.5M1809.8,158V156M1812.2,158V154.5M1814.7,158V156M1817.4,158V154M1820.2,158V156M1822.6,158V154.5M1825.1,158V156" stroke-width="1.1" stroke-linecap="butt"/>
<path d="M1803,161H1829" stroke-width="1.9" stroke-linecap="butt"/>
<!-- section plane -->
<path d="M1820.8,185.2V204.2L1811.2,212.8V193.2Z" fill="#e2e2e2" stroke="none"/>
<path d="M1802.8,201.4L1811.6,195H1829L1821.4,201.4Z" stroke-width="1.1" stroke-linejoin="miter"/>
<!-- box with section -->
<g stroke-width="1.1" stroke-linejoin="miter" stroke-linecap="butt">
<rect x="1804.4" y="237.4" width="16.4" height="16"/>
<rect x="1811.6" y="232.4" width="16.2" height="16"/>
<path d="M1804.4,237.4L1811.6,232.4M1820.8,237.4L1827.8,232.4M1804.4,253.4L1811.6,248.4M1820.8,253.4L1827.8,248.4"/>
</g>
<path d="M1814.2,236.4L1818.4,233V249.6L1814.2,253Z" fill="#e2e2e2" stroke="none"/>
<!-- floor plan -->
<path d="M1805,297.2H1830V279.4H1828.6V295.8H1805Z" fill="#e2e2e2" stroke="none"/>
<path d="M1805.6,276.8H1828V295.6H1802.8V279.8Z" stroke-width="1.3" stroke-linejoin="miter"/>
<path d="M1802.8,279.8H1805.6V276.8" stroke-width="1" stroke-linejoin="miter"/>
<path d="M1814.6,277.4V295.4M1803.4,285H1827.6" stroke-width="1.1" stroke-dasharray="3 1.2 1 1.2" stroke-linecap="butt"/>
<rect x="1821" y="292.8" width="6.6" height="2.8" fill="#e2e2e2" stroke="none"/>
<!-- target -->
<circle cx="1815.8" cy="331.1" r="7.8" stroke-width="1.8"/>
<circle cx="1815.8" cy="331.1" r="3.8" fill="#e2e2e2" stroke="none"/>
<path d="M1815.8,320.6V323.6M1815.8,338.6V341.6M1805.3,331.1H1808.3M1823.3,331.1H1826.3" stroke-width="1.5" stroke-linecap="butt"/>
<!-- flag in circle -->
<circle cx="1815.8" cy="374.6" r="12.7" stroke-width="1.1"/>
<path d="M1810.2,381.4V368.6Q1813.6,367.2 1817,368.8Q1820.6,370.2 1824,368.8V376.8Q1820.6,378.2 1817,376.8Q1813.6,375.4 1810.2,376.6" stroke-width="1.2" stroke-linejoin="miter"/>
<!-- grid axes -->
<path d="M1801.4,427.4L1830.9,411.4M1801.4,437.5L1830.9,421.3M1810.6,416.4L1829.6,426.8M1803.3,422.8L1820.8,432.9" stroke-width="1.1"/>
<text x="1800.4" y="420.4" font-family="Liberation Sans, sans-serif" font-size="5.6" font-weight="700" fill="#e2e2e2" stroke="none">1</text>
<text x="1811" y="413.8" font-family="Liberation Sans, sans-serif" font-size="5.6" font-weight="700" fill="#e2e2e2" stroke="none">2</text>
<!-- dashed squares -->
<g stroke-width="1.1" stroke-dasharray="2 2" stroke-linecap="butt" stroke-linejoin="miter">
<rect x="1804.4" y="461" width="23.2" height="23.2"/>
<rect x="1804.4" y="505.2" width="23.2" height="23.2"/>
<rect x="1804.4" y="549.4" width="23.2" height="23.2"/>
<path d="M1814,616.6H1804.4V593.4H1827.6V603"/>
</g>
<!-- cube in square -->
<path d="M1816.2,466L1822,469.2V476.2L1816.2,479.6L1810.4,476.2V469.2ZM1810.4,469.2L1816.2,472.6L1822,469.2M1816.2,472.6V479.6" stroke-width="1.1"/>
<!-- eye -->
<path d="M1809.2,517Q1816.2,508.8 1823.2,517Q1816.2,525.2 1809.2,517Z" fill="#e2e2e2" stroke="none"/>
<circle cx="1816.2" cy="517" r="2.6" fill="#545454" stroke="none"/>
<circle cx="1816.2" cy="517" r="1.2" fill="#e2e2e2" stroke="none"/>
<!-- eye off -->
<path d="M1808.8,561Q1816,552.8 1823.2,561Q1816,569.2 1808.8,561Z" fill="#e2e2e2" stroke="none"/>
<circle cx="1816" cy="561" r="2.6" fill="#545454" stroke="none"/>
<circle cx="1816" cy="561" r="1.1" fill="#e2e2e2" stroke="none"/>
<path d="M1810.4,555.2L1823.4,568.6" stroke="#545454" stroke-width="1.6"/>
<path d="M1809.2,554.6L1822.2,568" stroke-width="1.3"/>
<!-- X box -->
<rect x="1814" y="603" width="16.2" height="16" fill="#dcdcdc" stroke="none"/>
<path d="M1817.8,607.2L1826.6,614.8M1826.6,607.2L1817.8,614.8" stroke="#3a3a3a" stroke-width="1.3"/>
<!-- highlighted cube -->
<path d="M1804.8,645.3L1815.9,642.6L1827.2,644.7L1815.9,648.9Z" stroke-width="1.5" stroke-linejoin="miter"/>
<path d="M1804.6,645.2L1815.9,648.9V666.1L1805.8,658.1Z" fill="#e2e2e2" stroke="#e2e2e2" stroke-width="0.8"/>
<path d="M1815.9,648.9L1827.3,644.8L1826.2,658.1L1815.9,665.6" stroke-width="1.4" stroke-linejoin="miter"/>
<!-- orbit -->
<ellipse cx="1815.9" cy="698" rx="11" ry="5.2" stroke-width="1.6"/>
<ellipse cx="1815.9" cy="697.6" rx="5" ry="10.4" stroke-width="1.6"/>
<path d="M1815.9,695V697.4L1813.2,700.5M1815.9,697.4L1818.9,700.5" stroke-width="0.8"/>
<!-- resize corner -->
<path d="M1800,804.4V810H1805.6Z" fill="#e2e2e2" stroke="none"/>
</svg>

</body>
</html>
